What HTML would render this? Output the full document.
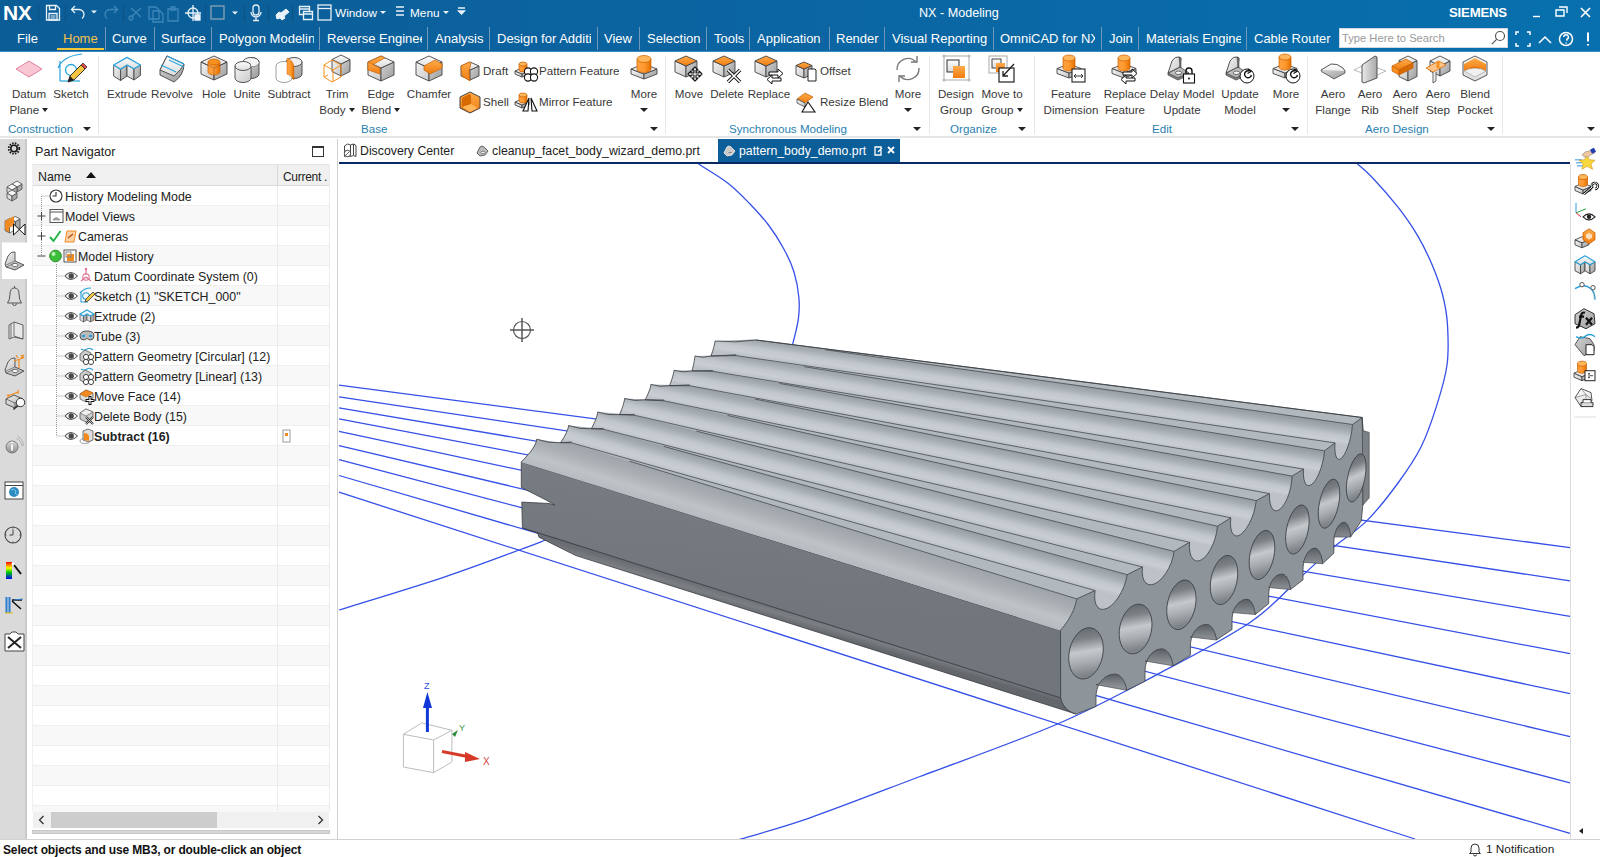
<!DOCTYPE html>
<html><head><meta charset="utf-8"><title>NX - Modeling</title>
<style>
*{box-sizing:border-box;margin:0;padding:0}
html,body{width:1600px;height:857px;overflow:hidden;background:#fff;font-family:"Liberation Sans",sans-serif;color:#222}
.a{position:absolute}
#top{left:0;top:0;width:1600px;height:52px;background:linear-gradient(to right,#0b5d96 0%,#0b64a1 45%,#0870ae 100%);border-bottom:1px solid #3a8cc2}
.tt{position:absolute;color:#fff;white-space:nowrap}
.tab{position:absolute;top:26px;height:26px;line-height:25px;font-size:13px;color:#fff;white-space:nowrap;overflow:hidden}
.tsep{position:absolute;top:27px;width:1px;height:23px;background:#7097b8}
#ribbon{left:0;top:52px;width:1600px;height:86px;background:#fff;border-bottom:2px solid #e6e6e6}
.lb{position:absolute;font-size:11.6px;color:#383838;white-space:nowrap;text-align:center;line-height:14px}
.glb{position:absolute;font-size:11.6px;color:#2a7fb0;white-space:nowrap;line-height:14px}
.gsep{position:absolute;top:56px;width:1px;height:78px;background:#e8e8e8}
.dd{position:absolute;width:0;height:0;border-left:4px solid transparent;border-right:4px solid transparent;border-top:4px solid #222}
#lstrip{left:0;top:139px;width:27px;height:700px;background:#dadada;border-right:2px solid #c9c9c9}
#nav{left:27px;top:139px;width:311px;height:700px;background:#fff;border-right:1px solid #cfcfcf}
.row{position:absolute;left:33px;width:296px;height:20px;border-bottom:1px solid #ececec}
.rt{position:absolute;font-size:12.4px;color:#222;white-space:nowrap;line-height:20px}
#vtabs{left:338px;top:139px;width:1262px;height:25px;background:#fff}
#status{left:0;top:839px;width:1600px;height:18px;background:#fff;border-top:1px solid #d2d2d2}
</style></head><body>
<div id="top" class="a">
<div class="tt" style="left:3px;top:1px;font-size:21px;font-weight:700;line-height:24px;letter-spacing:-0.5px">NX</div>
<svg class="a" style="left:0;top:0" width="520" height="26" viewBox="0 0 520 26" fill="none" stroke="#e8f1f8" stroke-width="1.3">
<line x1="38.5" y1="4" x2="38.5" y2="22" stroke="#0f5487"/>
<!-- save -->
<path d="M46.5 5.5h10l3 3v11.5h-13z"/><path d="M49.5 5.5v4h6v-4"/><path d="M49 13.5h8v6.5h-8z"/><path d="M50.5 16h5M50.5 18h5" stroke-width="1"/>
<line x1="65.5" y1="4" x2="65.5" y2="22" stroke="#0f5487"/>
<!-- undo -->
<path d="M72 9.5h7a5 5 0 0 1 5 5v0a5 5 0 0 1 -2 4"/><path d="M75 6l-3.5 3.5 3.5 3.5"/>
<path d="M91 10.5h6l-3 3z" fill="#e8f1f8" stroke="none"/>
<!-- redo disabled -->
<g stroke="#3f86b8"><path d="M117 9.5h-7a5 5 0 0 0 -5 5a5 5 0 0 0 2 4"/><path d="M114 6l3.5 3.5-3.5 3.5"/></g>
<line x1="123.5" y1="4" x2="123.5" y2="22" stroke="#0f5487"/>
<g stroke="#3f86b8"><path d="M131 8l10 9M141 8l-10 9"/><circle cx="131" cy="18" r="2"/><path d="M149 7h7l3 3v9h-10z"/><path d="M153 11h7l3 3v8h-10z"/><path d="M168 9h10v12h-10z"/><path d="M171 7h4v3h-4z"/></g>
<!-- cross icon -->
<circle cx="193" cy="13" r="5"/><path d="M193 5v16M185 13h16"/><path d="M195 15h5v5h-5z" fill="#e8f1f8"/>
<line x1="205.5" y1="4" x2="205.5" y2="22" stroke="#0f5487"/>
<rect x="211" y="6" width="13" height="13" stroke="#8aa3b6"/>
<path d="M232 11.5h6l-3 3z" fill="#e8f1f8" stroke="none"/>
<line x1="244.5" y1="4" x2="244.5" y2="22" stroke="#0f5487"/>
<!-- mic -->
<rect x="253" y="5" width="6" height="10" rx="3"/><path d="M251 12a5 5 0 0 0 10 0M256 17v3M253 20.5h6"/>
<line x1="268.5" y1="4" x2="268.5" y2="22" stroke="#0f5487"/>
<path d="M276 15l3-3 2 1 5-4 3 3 -5 4 1 2 -3 2 -2-2 -3 1z" fill="#e8f1f8" stroke-width="1"/>
<line x1="292.5" y1="4" x2="292.5" y2="22" stroke="#0f5487"/>
<path d="M299.5 6.5h10v8h-10z" /><path d="M303.5 11.5h9v8h-9z" fill="#0b64a0"/><path d="M299.5 9h10M303.5 14h9" />
<rect x="318" y="5" width="13" height="15"/><path d="M318 8.5h13"/>
<path d="M380 11h6l-3 3z" fill="#e8f1f8" stroke="none"/>
<path d="M396 7h8M396 11h8M396 15h8"/>
<path d="M443 11h6l-3 3z" fill="#e8f1f8" stroke="none"/>
<path d="M458 8h7M458.5 11h6l-3 3z" fill="#e8f1f8"/>
</svg>
<div class="tt" style="left:335px;top:6px;font-size:11.8px;line-height:15px">Window</div>
<div class="tt" style="left:410px;top:6px;font-size:11.8px;line-height:15px">Menu</div>
<div class="tt" style="left:919px;top:6px;font-size:12.6px;line-height:15px">NX - Modeling</div>
<div class="tt" style="left:1449px;top:5px;font-size:13.2px;font-weight:700;line-height:16px;letter-spacing:-0.2px">SIEMENS</div>
<svg class="a" style="left:1520px;top:0" width="80" height="26" fill="none" stroke="#fff" stroke-width="1.4">
<path d="M13 16.5h7"/>
<path d="M36 10h8v6h-8z M39 7h8v6"/>
<path d="M61 8l9 9M70 8l-9 9" stroke-width="1.6"/>
</svg>
<!-- tabs -->
<div class="tab" style="left:17px;width:40px">File</div>
<div class="tab" style="left:63px;width:40px;color:#f3c04a">Home</div>
<div class="a" style="left:57px;top:48px;width:47px;height:2px;background:#f0c53a"></div>
<div class="tsep" style="left:105px"></div>
<div class="tab" style="left:112px;width:40px">Curve</div>
<div class="tsep" style="left:154px"></div>
<div class="tab" style="left:161px;width:48px">Surface</div>
<div class="tsep" style="left:211px"></div>
<div class="tab" style="left:219px;width:95px">Polygon Modeling</div>
<div class="tsep" style="left:319px"></div>
<div class="tab" style="left:327px;width:95px">Reverse Engineering</div>
<div class="tsep" style="left:427px"></div>
<div class="tab" style="left:435px;width:52px">Analysis</div>
<div class="tsep" style="left:489px"></div>
<div class="tab" style="left:497px;width:94px">Design for Additive</div>
<div class="tsep" style="left:597px"></div>
<div class="tab" style="left:604px;width:34px">View</div>
<div class="tsep" style="left:639px"></div>
<div class="tab" style="left:647px;width:58px">Selection</div>
<div class="tsep" style="left:706px"></div>
<div class="tab" style="left:714px;width:34px">Tools</div>
<div class="tsep" style="left:749px"></div>
<div class="tab" style="left:757px;width:70px">Application</div>
<div class="tsep" style="left:829px"></div>
<div class="tab" style="left:836px;width:46px">Render</div>
<div class="tsep" style="left:884px"></div>
<div class="tab" style="left:892px;width:95px">Visual Reporting</div>
<div class="tsep" style="left:993px"></div>
<div class="tab" style="left:1000px;width:95px">OmniCAD for NX</div>
<div class="tsep" style="left:1101px"></div>
<div class="tab" style="left:1109px;width:27px">Join</div>
<div class="tsep" style="left:1138px"></div>
<div class="tab" style="left:1146px;width:95px">Materials Engineering</div>
<div class="tsep" style="left:1246px"></div>
<div class="tab" style="left:1254px;width:80px">Cable Router</div>
<div class="a" style="left:1339px;top:28px;width:169px;height:20px;background:#fff;border:1px solid #cfd8e0"></div>
<div class="a" style="left:1342px;top:31px;font-size:11.2px;color:#9a9a9a;line-height:14px;white-space:nowrap">Type Here to Search</div>
<svg class="a" style="left:1488px;top:28px" width="20" height="20" fill="none" stroke="#555" stroke-width="1.2"><circle cx="12" cy="8" r="4.5"/><path d="M8.8 11.2l-5 5"/></svg>
<svg class="a" style="left:1512px;top:26px" width="88" height="26" fill="none" stroke="#fff" stroke-width="1.5">
<path d="M4 9v-3h3M15 6h3v3M18 17v3h-3M7 20h-3v-3"/>
<path d="M27 17l6-6 6 6"/>
<circle cx="54" cy="13" r="6.5"/><path d="M51.8 11a2.3 2.3 0 1 1 3 2.2v1.6M54.2 16.6v0.8"/>
<path d="M76 6.5v9M76 18v1.5" stroke-width="2"/>
</svg>
</div>
<div id="ribbon" class="a"></div>
<svg class="a" style="left:0;top:0" width="1600" height="140">
<defs>
<linearGradient id="iw" x1="0" y1="0" x2="0" y2="1"><stop offset="0" stop-color="#fdfdfd"/><stop offset="1" stop-color="#dcdcdc"/></linearGradient>
<linearGradient id="il" x1="0" y1="0" x2="1" y2="1"><stop offset="0" stop-color="#f4f4f4"/><stop offset="1" stop-color="#c9c9c9"/></linearGradient>
<linearGradient id="ir" x1="0" y1="0" x2="1" y2="1"><stop offset="0" stop-color="#d2d2d2"/><stop offset="1" stop-color="#9c9c9c"/></linearGradient>
<linearGradient id="io" x1="0" y1="0" x2="0" y2="1"><stop offset="0" stop-color="#ffab4a"/><stop offset="1" stop-color="#f07c10"/></linearGradient>
<linearGradient id="ioh" x1="0" y1="0" x2="1" y2="0"><stop offset="0" stop-color="#ffa040"/><stop offset="0.5" stop-color="#ff9a30"/><stop offset="1" stop-color="#e57000"/></linearGradient>
<linearGradient id="ig" x1="0" y1="0" x2="1" y2="0"><stop offset="0" stop-color="#e9e9e9"/><stop offset="1" stop-color="#a8a8a8"/></linearGradient>
</defs>
<polygon points="16.0,69.0 29.0,61.0 42.0,69.0 29.0,77.0" fill="#f9c6d4" stroke="#e2809c" stroke-width="1" stroke-linejoin="round" />
<path d="M60,81 v-20 M58,68 q5,-12 24,-14" fill="none" stroke="#25a4dc" stroke-width="1.2"/><circle cx="71" cy="70" r="5.5" fill="none" stroke="#25a4dc" stroke-width="1.3"/><path d="M60,81 h20" stroke="#25a4dc" stroke-width="1.2"/><path d="M68,82 l2,-6 11,-11 4,4 -11,11z" fill="#f5c440" stroke="#222" stroke-width="0.9"/><path d="M81,65 l4,4 2,-2 -4,-4z" fill="#e24a4a" stroke="#222" stroke-width="0.7"/><path d="M68,82 l2,-6 4,4z" fill="#222"/>
<polygon points="113.7,65.0 120.6,69.3 120.6,80.5 113.7,76.2" fill="url(#il)" stroke="#444" stroke-width="0.9" stroke-linejoin="round" /><polygon points="120.6,69.3 127.0,65.0 127.0,76.0 120.6,80.5" fill="url(#ir)" stroke="#444" stroke-width="0.9" stroke-linejoin="round" /><polygon points="127.0,65.0 134.0,68.8 134.0,80.0 127.0,76.0" fill="url(#il)" stroke="#444" stroke-width="0.9" stroke-linejoin="round" /><polygon points="134.0,68.8 140.4,65.0 140.4,75.5 134.0,80.0" fill="url(#ir)" stroke="#444" stroke-width="0.9" stroke-linejoin="round" /><polygon points="113.7,65.0 127.0,57.4 140.4,65.0 134.0,68.8 127.0,65.0 120.6,69.3" fill="url(#iw)" stroke="#2aa6de" stroke-width="1.3" stroke-linejoin="round" />
<path d="M160,70 L167,56 L184,64 Q184,75 174,82 L160,75z" fill="url(#ir)" stroke="#444" stroke-width="0.9"/><path d="M160,70 L174,76 Q182,69 184,64 L167,56z" fill="url(#iw)" stroke="#444" stroke-width="0.9"/><path d="M161,65 l15,7 M167,56 l17,8 M169,60 l15,7" fill="none" stroke="#2aa6de" stroke-width="1.2"/>
<polygon points="201.0,62.0 214.0,68.0 214.0,80.0 201.0,74.0" fill="url(#il)" stroke="#444" stroke-width="0.9" stroke-linejoin="round" /><polygon points="214.0,68.0 227.0,62.0 227.0,74.0 214.0,80.0" fill="url(#ir)" stroke="#444" stroke-width="0.9" stroke-linejoin="round" /><polygon points="214.0,56.0 227.0,62.0 214.0,68.0 201.0,62.0" fill="#ececec" stroke="#444" stroke-width="0.9" stroke-linejoin="round" /><path d="M208,62 v10 a6,3 0 0 0 12,0 v-10z" fill="url(#ioh)" stroke="#c86000" stroke-width="0.7"/><ellipse cx="214" cy="62" rx="6" ry="3" fill="#f7901e" stroke="#c86000" stroke-width="0.7"/><path d="M201,62 L214,68 L227,62 M214,68 V80" fill="none" stroke="#444" stroke-width="0.6" opacity="0.6"/>
<path d="M243,62 v12 a8,4.5 0 0 0 16,0 v-12z" fill="url(#ir)" stroke="#444" stroke-width="0.9"/><ellipse cx="251" cy="62" rx="8" ry="4.5" fill="url(#iw)" stroke="#444" stroke-width="0.9"/><path d="M235,66 v12 a8,4.5 0 0 0 16,0 v-12z" fill="url(#il)" stroke="#444" stroke-width="0.9"/><ellipse cx="243" cy="66" rx="8" ry="4.5" fill="url(#iw)" stroke="#444" stroke-width="0.9"/><path d="M251,57.5 a8,4.5 0 0 1 0,9" fill="#f4f4f4" stroke="none"/><path d="M251,57.5 a8,4.5 0 0 1 8,4.5" fill="none" stroke="#444" stroke-width="0.9"/>
<path d="M286,62 v12 a8,4.5 0 0 0 16,0 v-12z" fill="url(#ir)" stroke="#444" stroke-width="0.9"/><ellipse cx="294" cy="62" rx="8" ry="4.5" fill="#eeeeee" stroke="#444" stroke-width="0.9"/><path d="M276,66 v12 a8,4.5 0 0 0 16,0 v-12 a8,4.5 0 0 0 -16,0z" fill="#fff" stroke="#888" stroke-width="0.8"/><path d="M287,58 q6,2 7,9 v13 q-3,-5 -7,-6z" fill="url(#ioh)" stroke="#c86000" stroke-width="0.5"/>
<polygon points="332.0,59.5 341.0,64.0 341.0,76.0 332.0,71.5" fill="url(#il)" stroke="#444" stroke-width="0.9" stroke-linejoin="round" /><polygon points="341.0,64.0 350.0,59.5 350.0,71.5 341.0,76.0" fill="url(#ir)" stroke="#444" stroke-width="0.9" stroke-linejoin="round" /><polygon points="341.0,55.0 350.0,59.5 341.0,64.0 332.0,59.5" fill="url(#iw)" stroke="#444" stroke-width="0.9" stroke-linejoin="round" /><path d="M324,65 l8,-5 9,5 v12 l-9,5 -8,-5z M324,65 l9,5 8,-5 M333,70 v12 M324,77 l4,-2" fill="none" stroke="#f7901e" stroke-width="1"/>
<polygon points="368.0,62.0 381.0,68.0 381.0,81.0 368.0,75.0" fill="url(#il)" stroke="#444" stroke-width="0.9" stroke-linejoin="round" /><polygon points="381.0,68.0 394.0,62.0 394.0,75.0 381.0,81.0" fill="url(#ir)" stroke="#444" stroke-width="0.9" stroke-linejoin="round" /><polygon points="381.0,56.0 394.0,62.0 381.0,68.0 368.0,62.0" fill="url(#iw)" stroke="#444" stroke-width="0.9" stroke-linejoin="round" /><path d="M368,62 L381,56 L385,58 L372,65 Q369,66 368,70z" fill="url(#io)" stroke="#c86000" stroke-width="0.6"/><path d="M368,62 Q368,72 377,73 L381,74" fill="none"/><polygon points="368.0,62.0 380.0,68.0 380.0,74.0 368.0,70.0" fill="url(#io)" stroke="#c86000" stroke-width="0.6" stroke-linejoin="round" />
<polygon points="416.0,62.0 429.0,68.0 429.0,81.0 416.0,75.0" fill="url(#il)" stroke="#444" stroke-width="0.9" stroke-linejoin="round" /><polygon points="429.0,68.0 442.0,62.0 442.0,75.0 429.0,81.0" fill="url(#ir)" stroke="#444" stroke-width="0.9" stroke-linejoin="round" /><polygon points="429.0,56.0 442.0,62.0 429.0,68.0 416.0,62.0" fill="url(#iw)" stroke="#444" stroke-width="0.9" stroke-linejoin="round" /><polygon points="424.0,66.0 435.0,60.0 442.0,64.0 442.0,68.0 430.0,74.0 424.0,70.0" fill="url(#io)" stroke="#c86000" stroke-width="0.7" stroke-linejoin="round" />
<polygon points="631.0,69.0 644.0,74.0 644.0,79.0 631.0,74.0" fill="url(#il)" stroke="#444" stroke-width="0.9" stroke-linejoin="round" /><polygon points="644.0,74.0 657.0,69.0 657.0,74.0 644.0,79.0" fill="url(#ir)" stroke="#444" stroke-width="0.9" stroke-linejoin="round" /><polygon points="644.0,64.0 657.0,69.0 644.0,74.0 631.0,69.0" fill="url(#iw)" stroke="#444" stroke-width="0.9" stroke-linejoin="round" /><path d="M637,59 v10 a7,3.5 0 0 0 14,0 v-10z" fill="url(#ioh)" stroke="#c86000" stroke-width="0.7"/><ellipse cx="644" cy="59" rx="7" ry="3.5" fill="#ffb559" stroke="#c86000" stroke-width="0.7"/>
<polygon points="675.0,61.0 686.0,66.0 686.0,77.0 675.0,72.0" fill="url(#il)" stroke="#444" stroke-width="0.9" stroke-linejoin="round" /><polygon points="686.0,66.0 697.0,61.0 697.0,72.0 686.0,77.0" fill="url(#ir)" stroke="#444" stroke-width="0.9" stroke-linejoin="round" /><polygon points="686.0,56.0 697.0,61.0 686.0,66.0 675.0,61.0" fill="url(#io)" stroke="#444" stroke-width="0.9" stroke-linejoin="round" /><path d="M695,67 l3,3 h-2 v3 h3 v-2 l3,3 -3,3 v-2 h-3 v3 h2 l-3,3 -3,-3 h2 v-3 h-3 v2 l-3,-3 3,-3 v2 h3 v-3 h-2z" fill="#fff" stroke="#111" stroke-width="1.1" stroke-linejoin="round"/>
<polygon points="713.0,61.0 724.0,66.0 724.0,77.0 713.0,72.0" fill="url(#il)" stroke="#444" stroke-width="0.9" stroke-linejoin="round" /><polygon points="724.0,66.0 735.0,61.0 735.0,72.0 724.0,77.0" fill="url(#ir)" stroke="#444" stroke-width="0.9" stroke-linejoin="round" /><polygon points="724.0,56.0 735.0,61.0 724.0,66.0 713.0,61.0" fill="url(#io)" stroke="#444" stroke-width="0.9" stroke-linejoin="round" /><path d="M728,70 L740,82 M740,70 L728,82" stroke="#111" stroke-width="3.4"/><path d="M728,70 L740,82 M740,70 L728,82" stroke="#fff" stroke-width="1.6"/>
<polygon points="755.0,61.0 766.0,66.0 766.0,77.0 755.0,72.0" fill="url(#il)" stroke="#444" stroke-width="0.9" stroke-linejoin="round" /><polygon points="766.0,66.0 777.0,61.0 777.0,72.0 766.0,77.0" fill="url(#ir)" stroke="#444" stroke-width="0.9" stroke-linejoin="round" /><polygon points="766.0,56.0 777.0,61.0 766.0,66.0 755.0,61.0" fill="url(#io)" stroke="#444" stroke-width="0.9" stroke-linejoin="round" /><path d="M769,72 h9 v-3 l5,4.5 -5,4.5 v-3 h-9z" fill="#fff" stroke="#111" stroke-width="1"/><path d="M781,78 h-9 v-3 l-5,4.5 5,4.5 v-3 h9z" fill="#fff" stroke="#111" stroke-width="1"/>
<path d="M897,70 a11,11 0 0 1 19,-8" fill="none" stroke="#777" stroke-width="1.4"/><path d="M917,56 v6 h-6" fill="none" stroke="#777" stroke-width="1.4"/><path d="M919,68 a11,11 0 0 1 -19,8" fill="none" stroke="#777" stroke-width="1.4"/><path d="M899,82 v-6 h6" fill="none" stroke="#777" stroke-width="1.4"/>
<rect x="944" y="56" width="25" height="24" fill="none" stroke="#aaa" stroke-width="1"/><circle cx="944" cy="56" r="1.6" fill="#bbb"/><circle cx="969" cy="56" r="1.6" fill="#bbb"/><circle cx="944" cy="80" r="1.6" fill="#bbb"/><circle cx="969" cy="80" r="1.6" fill="#bbb"/><rect x="947" y="60" width="12" height="12" fill="url(#iw)" stroke="#333" stroke-width="1"/><rect x="953" y="66" width="12" height="12" fill="url(#io)"/>
<rect x="989" y="56" width="18" height="17" fill="none" stroke="#aaa" stroke-width="1"/><rect x="992" y="59" width="9" height="9" fill="url(#iw)" stroke="#333" stroke-width="0.9"/><rect x="996" y="63" width="9" height="9" fill="url(#io)"/><rect x="999" y="68" width="15" height="14" fill="#fff" stroke="#222" stroke-width="1.2"/><path d="M1014,64 L1003,76 M1003,71 v5 h5" fill="none" stroke="#222" stroke-width="1.3"/>
<polygon points="1057.0,68.5 1069.0,73.0 1069.0,78.0 1057.0,73.5" fill="url(#il)" stroke="#444" stroke-width="0.9" stroke-linejoin="round" /><polygon points="1069.0,73.0 1081.0,68.5 1081.0,73.5 1069.0,78.0" fill="url(#ir)" stroke="#444" stroke-width="0.9" stroke-linejoin="round" /><polygon points="1069.0,64.0 1081.0,68.5 1069.0,73.0 1057.0,68.5" fill="url(#iw)" stroke="#444" stroke-width="0.9" stroke-linejoin="round" /><path d="M1063,58 v10 a6,3 0 0 0 12,0 v-10z" fill="url(#ioh)" stroke="#c86000" stroke-width="0.7"/><ellipse cx="1069" cy="58" rx="6" ry="3" fill="#ffb559" stroke="#c86000" stroke-width="0.7"/><rect x="1072" y="69" width="13" height="13" fill="#fff" stroke="#222" stroke-width="1.1"/><path d="M1074,76 h9 M1076,74 l-2,2 2,2 M1081,74 l2,2 -2,2" fill="none" stroke="#222" stroke-width="0.9"/>
<polygon points="1112.0,68.5 1124.0,73.0 1124.0,78.0 1112.0,73.5" fill="url(#il)" stroke="#444" stroke-width="0.9" stroke-linejoin="round" /><polygon points="1124.0,73.0 1136.0,68.5 1136.0,73.5 1124.0,78.0" fill="url(#ir)" stroke="#444" stroke-width="0.9" stroke-linejoin="round" /><polygon points="1124.0,64.0 1136.0,68.5 1124.0,73.0 1112.0,68.5" fill="url(#iw)" stroke="#444" stroke-width="0.9" stroke-linejoin="round" /><path d="M1118,58 v10 a6,3 0 0 0 12,0 v-10z" fill="url(#ioh)" stroke="#c86000" stroke-width="0.7"/><ellipse cx="1124" cy="58" rx="6" ry="3" fill="#ffb559" stroke="#c86000" stroke-width="0.7"/><path d="M1123,72 h9 v-3 l5,4.5 -5,4.5 v-3 h-9z" fill="#fff" stroke="#111" stroke-width="1"/><path d="M1135,78 h-9 v-3 l-5,4.5 5,4.5 v-3 h9z" fill="#fff" stroke="#111" stroke-width="1"/>
<path d="M1168,73 L1168,75 L1178,80 L1189,75 L1189,73z" fill="#8a8a8a" stroke="#444" stroke-width="0.8"/><path d="M1168,73 L1180,67 L1189,73 L1178,78z" fill="url(#ir)" stroke="#444" stroke-width="0.8"/><ellipse cx="1178.5" cy="72.8" rx="3.2" ry="1.7" fill="#f2f2f2" stroke="#444" stroke-width="0.7"/><path d="M1168,73 L1172,61 Q1175,56 1179,57 L1181,58 L1180,67z" fill="url(#il)" stroke="#444" stroke-width="0.9"/><path d="M1179,57 L1181,58 L1181,68 L1180,67z" fill="#777" stroke="#444" stroke-width="0.6"/><path d="M1186,74 v-3 a3,3 0 0 1 6,0 v3" fill="none" stroke="#111" stroke-width="1.4"/><rect x="1183.5" y="74" width="11" height="9" fill="#fff" stroke="#111" stroke-width="1.1"/><circle cx="1189" cy="78.5" r="1" fill="#111"/>
<path d="M1226,73 L1226,75 L1236,80 L1247,75 L1247,73z" fill="#8a8a8a" stroke="#444" stroke-width="0.8"/><path d="M1226,73 L1238,67 L1247,73 L1236,78z" fill="url(#ir)" stroke="#444" stroke-width="0.8"/><ellipse cx="1236.5" cy="72.8" rx="3.2" ry="1.7" fill="#f2f2f2" stroke="#444" stroke-width="0.7"/><path d="M1226,73 L1230,61 Q1233,56 1237,57 L1239,58 L1238,67z" fill="url(#il)" stroke="#444" stroke-width="0.9"/><path d="M1237,57 L1239,58 L1239,68 L1238,67z" fill="#777" stroke="#444" stroke-width="0.6"/><circle cx="1247" cy="76" r="7.0" fill="#fff" stroke="#111" stroke-width="1"/><path d="M1251.5,75 a3.5,3.5 0 1 1 -2,-4" fill="none" stroke="#111" stroke-width="1.4"/><path d="M1248,69 l3,2.5 -3.5,2" fill="none" stroke="#111" stroke-width="1.2"/>
<polygon points="1273.0,68.5 1285.0,73.0 1285.0,78.0 1273.0,73.5" fill="url(#il)" stroke="#444" stroke-width="0.9" stroke-linejoin="round" /><polygon points="1285.0,73.0 1297.0,68.5 1297.0,73.5 1285.0,78.0" fill="url(#ir)" stroke="#444" stroke-width="0.9" stroke-linejoin="round" /><polygon points="1285.0,64.0 1297.0,68.5 1285.0,73.0 1273.0,68.5" fill="url(#iw)" stroke="#444" stroke-width="0.9" stroke-linejoin="round" /><path d="M1279,57 v10 a6,3 0 0 0 12,0 v-10z" fill="url(#ioh)" stroke="#c86000" stroke-width="0.7"/><ellipse cx="1285" cy="57" rx="6" ry="3" fill="#ffb559" stroke="#c86000" stroke-width="0.7"/><circle cx="1293" cy="76" r="7.0" fill="#fff" stroke="#111" stroke-width="1"/><path d="M1297.5,75 a3.5,3.5 0 1 1 -2,-4" fill="none" stroke="#111" stroke-width="1.4"/><path d="M1294,69 l3,2.5 -3.5,2" fill="none" stroke="#111" stroke-width="1.2"/>
<path d="M1321,70 L1331,64 Q1337,63 1343,68 L1345,71 L1334,77 Q1327,73 1321,70z" fill="url(#iw)" stroke="#444" stroke-width="0.9"/><path d="M1321,70 l1,2 Q1328,75 1334,79 L1345,73 v-2" fill="url(#ir)" stroke="#444" stroke-width="0.8"/>
<polygon points="1354,70 1366,64 1386,71 1373,77" fill="none" stroke="#aaa" stroke-width="0.8"/><polygon points="1362.0,65.0 1375.0,56.0 1377.0,57.0 1377.0,78.0 1364.0,83.0 1362.0,82.0" fill="url(#ig)" stroke="#444" stroke-width="0.9" stroke-linejoin="round" />
<polygon points="1399.0,60.5 1408.0,65.0 1408.0,81.0 1399.0,76.5" fill="url(#il)" stroke="#444" stroke-width="0.9" stroke-linejoin="round" /><polygon points="1408.0,65.0 1417.0,60.5 1417.0,76.5 1408.0,81.0" fill="url(#ir)" stroke="#444" stroke-width="0.9" stroke-linejoin="round" /><polygon points="1408.0,56.0 1417.0,60.5 1408.0,65.0 1399.0,60.5" fill="url(#iw)" stroke="#444" stroke-width="0.9" stroke-linejoin="round" /><polygon points="1392.0,66.0 1406.0,59.0 1413.0,63.0 1399.0,70.0" fill="url(#io)" stroke="#c86000" stroke-width="0.7" stroke-linejoin="round" /><polygon points="1392.0,66.0 1399.0,70.0 1399.0,75.0 1392.0,71.0" fill="#f7901e" stroke="#c86000" stroke-width="0.7" stroke-linejoin="round" /><polygon points="1399.0,70.0 1413.0,63.0 1413.0,68.0 1399.0,75.0" fill="#d96a00" stroke="#c86000" stroke-width="0.7" stroke-linejoin="round" />
<polygon points="1430.0,61.0 1440.0,66.0 1440.0,76.0 1430.0,71.0" fill="url(#il)" stroke="#444" stroke-width="0.9" stroke-linejoin="round" /><polygon points="1440.0,66.0 1450.0,61.0 1450.0,71.0 1440.0,76.0" fill="url(#ir)" stroke="#444" stroke-width="0.9" stroke-linejoin="round" /><polygon points="1440.0,56.0 1450.0,61.0 1440.0,66.0 1430.0,61.0" fill="url(#iw)" stroke="#444" stroke-width="0.9" stroke-linejoin="round" /><polygon points="1426.0,68.0 1439.0,61.0 1446.0,65.0 1433.0,72.0" fill="#ffc48a" stroke="#e07000" stroke-width="0.8" stroke-linejoin="round" /><path d="M1433,72 v11 l3,-2 v-9" fill="#eee" stroke="#444" stroke-width="0.8"/><path d="M1438,61 v7" stroke="#f7901e" stroke-width="3"/>
<polygon points="1475.0,56.0 1487.0,62.0 1487.0,75.0 1475.0,81.0 1463.0,75.0 1463.0,62.0" fill="url(#iw)" stroke="#444" stroke-width="0.9" stroke-linejoin="round" /><path d="M1464,64 L1475,58 L1486,64 V71 Q1475,65 1464,71z" fill="url(#io)"/><path d="M1464,71 Q1475,65 1486,71 L1475,77z" fill="#f0f0f0" stroke="#999" stroke-width="0.6"/><path d="M1467,70 Q1475,63 1483,70 L1486,71 Q1475,65 1464,71z" fill="#d96a00" opacity="0.7"/>
<polygon points="461.0,66.0 470.0,70.0 470.0,80.0 461.0,76.0" fill="url(#il)" stroke="#444" stroke-width="0.9" stroke-linejoin="round" /><polygon points="470.0,70.0 479.0,66.0 479.0,76.0 470.0,80.0" fill="url(#ir)" stroke="#444" stroke-width="0.9" stroke-linejoin="round" /><polygon points="470.0,62.0 479.0,66.0 470.0,70.0 461.0,66.0" fill="url(#iw)" stroke="#444" stroke-width="0.9" stroke-linejoin="round" /><polygon points="461.0,66.0 469.0,62.0 471.0,63.0 469.0,72.0 470.0,81.0 462.0,76.0" fill="url(#io)" stroke="#c86000" stroke-width="0.7" stroke-linejoin="round" />
<polygon points="470.0,92.0 480.0,97.0 480.0,108.0 470.0,113.0 460.0,108.0 460.0,97.0" fill="url(#io)" stroke="#444" stroke-width="1" stroke-linejoin="round" /><polygon points="462.0,98.0 469.0,94.0 471.0,95.0 471.0,105.0 478.0,108.0 470.0,112.0 462.0,108.0" fill="#d96a00" stroke="none" stroke-width="0" stroke-linejoin="round" /><polygon points="462.0,107.0 471.0,104.0 478.0,108.0 470.0,112.0" fill="#ffb559" stroke="none" stroke-width="0" stroke-linejoin="round" />
<polygon points="515.0,71.0 522.0,74.0 522.0,77.0 515.0,74.0" fill="url(#il)" stroke="#444" stroke-width="0.9" stroke-linejoin="round" /><polygon points="522.0,74.0 529.0,71.0 529.0,74.0 522.0,77.0" fill="url(#ir)" stroke="#444" stroke-width="0.9" stroke-linejoin="round" /><polygon points="522.0,68.0 529.0,71.0 522.0,74.0 515.0,71.0" fill="url(#iw)" stroke="#444" stroke-width="0.9" stroke-linejoin="round" /><path d="M519,64 v6 a4,2 0 0 0 8,0 v-6z" fill="url(#ioh)" stroke="#c86000" stroke-width="0.7"/><ellipse cx="523" cy="64" rx="4" ry="2" fill="#ffb559" stroke="#c86000" stroke-width="0.7"/><circle cx="528" cy="71.5" r="3.6" fill="#fff" stroke="#111" stroke-width="1.1"/><circle cx="534" cy="71.5" r="3.6" fill="#fff" stroke="#111" stroke-width="1.1"/><circle cx="528" cy="77.5" r="3.6" fill="#fff" stroke="#111" stroke-width="1.1"/><circle cx="534" cy="77.5" r="3.6" fill="#fff" stroke="#111" stroke-width="1.1"/>
<polygon points="515.0,102.0 522.0,105.0 522.0,108.0 515.0,105.0" fill="url(#il)" stroke="#444" stroke-width="0.9" stroke-linejoin="round" /><polygon points="522.0,105.0 529.0,102.0 529.0,105.0 522.0,108.0" fill="url(#ir)" stroke="#444" stroke-width="0.9" stroke-linejoin="round" /><polygon points="522.0,99.0 529.0,102.0 522.0,105.0 515.0,102.0" fill="url(#iw)" stroke="#444" stroke-width="0.9" stroke-linejoin="round" /><path d="M519,95 v6 a4,2 0 0 0 8,0 v-6z" fill="url(#ioh)" stroke="#c86000" stroke-width="0.7"/><ellipse cx="523" cy="95" rx="4" ry="2" fill="#ffb559" stroke="#c86000" stroke-width="0.7"/><path d="M529,98 l-6,13 h5z M531,98 l6,13 h-5z" fill="#fff" stroke="#111" stroke-width="1.1"/>
<polygon points="796.0,65.5 804.0,69.0 804.0,78.0 796.0,74.5" fill="url(#il)" stroke="#444" stroke-width="0.9" stroke-linejoin="round" /><polygon points="804.0,69.0 812.0,65.5 812.0,74.5 804.0,78.0" fill="url(#ir)" stroke="#444" stroke-width="0.9" stroke-linejoin="round" /><polygon points="804.0,62.0 812.0,65.5 804.0,69.0 796.0,65.5" fill="url(#io)" stroke="#444" stroke-width="0.9" stroke-linejoin="round" /><path d="M808,69 h7 l1,1 v11 h-8z" fill="#fff" stroke="#222" stroke-width="1"/>
<polygon points="797.0,99.0 805.0,93.0 813.0,97.0 805.0,103.0" fill="url(#io)" stroke="#c86000" stroke-width="0.7" stroke-linejoin="round" /><polygon points="797.0,99.0 805.0,103.0 805.0,107.0 797.0,103.0" fill="url(#il)" stroke="#444" stroke-width="0.8" stroke-linejoin="round" /><path d="M808,102 l7,10 h-13z" fill="#fff" stroke="#111" stroke-width="1.1"/>
</svg>
<div class="lb" style="left:-31px;top:87px;width:120px">Datum</div>
<div class="lb" style="left:-31px;top:103px;width:120px">Plane&nbsp;<span style="display:inline-block;width:0;height:0;border-left:3.5px solid transparent;border-right:3.5px solid transparent;border-top:4px solid #222;vertical-align:2px"></span></div>
<div class="lb" style="left:11px;top:87px;width:120px">Sketch</div>
<div class="lb" style="left:67px;top:87px;width:120px">Extrude</div>
<div class="lb" style="left:112px;top:87px;width:120px">Revolve</div>
<div class="lb" style="left:154px;top:87px;width:120px">Hole</div>
<div class="lb" style="left:187px;top:87px;width:120px">Unite</div>
<div class="lb" style="left:229px;top:87px;width:120px">Subtract</div>
<div class="lb" style="left:277px;top:87px;width:120px">Trim</div>
<div class="lb" style="left:277px;top:103px;width:120px">Body&nbsp;<span style="display:inline-block;width:0;height:0;border-left:3.5px solid transparent;border-right:3.5px solid transparent;border-top:4px solid #222;vertical-align:2px"></span></div>
<div class="lb" style="left:321px;top:87px;width:120px">Edge</div>
<div class="lb" style="left:321px;top:103px;width:120px">Blend&nbsp;<span style="display:inline-block;width:0;height:0;border-left:3.5px solid transparent;border-right:3.5px solid transparent;border-top:4px solid #222;vertical-align:2px"></span></div>
<div class="lb" style="left:369px;top:87px;width:120px">Chamfer</div>
<div class="lb" style="left:584px;top:87px;width:120px">More</div>
<div class="dd" style="left:640px;top:108px"></div>
<div class="lb" style="left:629px;top:87px;width:120px">Move</div>
<div class="lb" style="left:667px;top:87px;width:120px">Delete</div>
<div class="lb" style="left:709px;top:87px;width:120px">Replace</div>
<div class="lb" style="left:848px;top:87px;width:120px">More</div>
<div class="dd" style="left:904px;top:108px"></div>
<div class="lb" style="left:896px;top:87px;width:120px">Design</div>
<div class="lb" style="left:896px;top:103px;width:120px">Group</div>
<div class="lb" style="left:942px;top:87px;width:120px">Move to</div>
<div class="lb" style="left:942px;top:103px;width:120px">Group&nbsp;<span style="display:inline-block;width:0;height:0;border-left:3.5px solid transparent;border-right:3.5px solid transparent;border-top:4px solid #222;vertical-align:2px"></span></div>
<div class="lb" style="left:1011px;top:87px;width:120px">Feature</div>
<div class="lb" style="left:1011px;top:103px;width:120px">Dimension</div>
<div class="lb" style="left:1065px;top:87px;width:120px">Replace</div>
<div class="lb" style="left:1065px;top:103px;width:120px">Feature</div>
<div class="lb" style="left:1122px;top:87px;width:120px">Delay Model</div>
<div class="lb" style="left:1122px;top:103px;width:120px">Update</div>
<div class="lb" style="left:1180px;top:87px;width:120px">Update</div>
<div class="lb" style="left:1180px;top:103px;width:120px">Model</div>
<div class="lb" style="left:1226px;top:87px;width:120px">More</div>
<div class="dd" style="left:1282px;top:108px"></div>
<div class="lb" style="left:1273px;top:87px;width:120px">Aero</div>
<div class="lb" style="left:1273px;top:103px;width:120px">Flange</div>
<div class="lb" style="left:1310px;top:87px;width:120px">Aero</div>
<div class="lb" style="left:1310px;top:103px;width:120px">Rib</div>
<div class="lb" style="left:1345px;top:87px;width:120px">Aero</div>
<div class="lb" style="left:1345px;top:103px;width:120px">Shelf</div>
<div class="lb" style="left:1378px;top:87px;width:120px">Aero</div>
<div class="lb" style="left:1378px;top:103px;width:120px">Step</div>
<div class="lb" style="left:1415px;top:87px;width:120px">Blend</div>
<div class="lb" style="left:1415px;top:103px;width:120px">Pocket</div>
<div class="lb" style="left:483px;top:64px;text-align:left">Draft</div>
<div class="lb" style="left:483px;top:95px;text-align:left">Shell</div>
<div class="lb" style="left:539px;top:64px;text-align:left">Pattern Feature</div>
<div class="lb" style="left:539px;top:95px;text-align:left">Mirror Feature</div>
<div class="lb" style="left:820px;top:64px;text-align:left">Offset</div>
<div class="lb" style="left:820px;top:95px;text-align:left">Resize Blend</div>
<div class="glb" style="left:8px;top:122px">Construction</div>
<div class="dd" style="left:83px;top:127px"></div>
<div class="glb" style="left:361px;top:122px">Base</div>
<div class="dd" style="left:650px;top:127px"></div>
<div class="glb" style="left:729px;top:122px">Synchronous Modeling</div>
<div class="dd" style="left:913px;top:127px"></div>
<div class="glb" style="left:950px;top:122px">Organize</div>
<div class="dd" style="left:1018px;top:127px"></div>
<div class="glb" style="left:1152px;top:122px">Edit</div>
<div class="dd" style="left:1291px;top:127px"></div>
<div class="glb" style="left:1365px;top:122px">Aero Design</div>
<div class="dd" style="left:1487px;top:127px"></div>
<div class="dd" style="left:1587px;top:127px"></div>
<div class="gsep" style="left:98px"></div>
<div class="gsep" style="left:665px"></div>
<div class="gsep" style="left:929px"></div>
<div class="gsep" style="left:1034px"></div>
<div class="gsep" style="left:1307px"></div>
<div class="gsep" style="left:1502px"></div>
<div id="lstrip" class="a"></div>
<svg class="a" style="left:0;top:0" width="27" height="860">
<defs><linearGradient id="sg" x1="0" y1="0" x2="1" y2="1"><stop offset="0" stop-color="#f2f2f2"/><stop offset="1" stop-color="#a9a9a9"/></linearGradient><linearGradient id="sg2" x1="0" y1="0" x2="0" y2="1"><stop offset="0" stop-color="#d9d9d9"/><stop offset="1" stop-color="#8f8f8f"/></linearGradient><linearGradient id="rb" x1="0" y1="0" x2="0" y2="1"><stop offset="0" stop-color="#f00"/><stop offset="0.35" stop-color="#ff0"/><stop offset="0.6" stop-color="#0c0"/><stop offset="1" stop-color="#00f"/></linearGradient></defs>
<circle cx="14" cy="148.5" r="3.2" fill="none" stroke="#1a1a1a" stroke-width="1.6"/><circle cx="14" cy="148.5" r="5.3" fill="none" stroke="#1a1a1a" stroke-width="1.8" stroke-dasharray="1.6,1.2"/>
<polygon points="12,184 17,187 17,192 12,189" fill="#dedede" stroke="#4a4a4a" stroke-width="0.8"/><polygon points="17,187 22,184 22,189 17,192" fill="#a8a8a8" stroke="#4a4a4a" stroke-width="0.8"/><polygon points="12,184 17,181 22,184 17,187" fill="#f6f6f6" stroke="#4a4a4a" stroke-width="0.8"/><polygon points="7,187 12,190 12,195 7,192" fill="#dedede" stroke="#4a4a4a" stroke-width="0.8"/><polygon points="12,190 17,187 17,192 12,195" fill="#a8a8a8" stroke="#4a4a4a" stroke-width="0.8"/><polygon points="7,187 12,184 17,187 12,190" fill="#f6f6f6" stroke="#4a4a4a" stroke-width="0.8"/><polygon points="7,193 12,196 12,201 7,198" fill="#dedede" stroke="#4a4a4a" stroke-width="0.8"/><polygon points="12,196 17,193 17,198 12,201" fill="#a8a8a8" stroke="#4a4a4a" stroke-width="0.8"/><polygon points="7,193 12,190 17,193 12,196" fill="#f6f6f6" stroke="#4a4a4a" stroke-width="0.8"/>
<polygon points="11,219 15.5,221.5 15.5,230.5 11,228" fill="#dedede" stroke="#4a4a4a" stroke-width="0.8"/><polygon points="15.5,221.5 20.0,219 20.0,228 15.5,230.5" fill="#a8a8a8" stroke="#4a4a4a" stroke-width="0.8"/><polygon points="11,219 15.5,216.5 20.0,219 15.5,221.5" fill="#f6f6f6" stroke="#4a4a4a" stroke-width="0.8"/>
<polygon points="5,221 9.5,223.5 9.5,233 5,230.5" fill="#f28a1e" stroke="#555" stroke-width="0.7"/><polygon points="9.5,223.5 14,221 14,230.5 9.5,233" fill="#f5f5f5" stroke="#555" stroke-width="0.7"/><polygon points="5,221 9.5,218.5 14,221 9.5,223.5" fill="#f7a040" stroke="#555" stroke-width="0.7"/><polygon points="5,221 14,216 14,226 5,229" fill="#f28a1e" opacity="0.9"/>
<path d="M13.5,224 L25,235 V224 L13.5,235z" fill="#fff" stroke="#111" stroke-width="1"/>
<rect x="2" y="242.5" width="25" height="36.5" fill="#fff"/>
<path d="M5,264 L8,256 Q11,251 15,252 L15,261 L24,265 L15,270 L6,267z" fill="url(#sg)" stroke="#4a4a4a" stroke-width="0.9"/><path d="M15,261 L6,265 M6,267 L15,263" fill="none" stroke="#4a4a4a" stroke-width="0.6"/><ellipse cx="15" cy="265" rx="3" ry="1.6" fill="#fff" stroke="#4a4a4a" stroke-width="0.7"/>
<path d="M7.5,303 Q10,300 10,294 Q10,288 14.5,288 Q19,288 19,294 Q19,300 21.5,303z M12.5,303.5 a2,2 0 0 0 4,0 M14.5,286 v2" fill="none" stroke="#555" stroke-width="1"/>
<path d="M9,325 l5,-3 l9,3 v14 l-9,-2 l-5,2z" fill="#e8e8e8" stroke="#555" stroke-width="0.9"/><path d="M14,322 v14 M11,324 v14" fill="none" stroke="#555" stroke-width="0.8"/><path d="M14,336 l9,3" stroke="#555" stroke-width="0.8"/>
<path d="M5,370 L8,362 Q11,357 15,358 L15,367 L24,371 L15,376 L6,373z" fill="url(#sg)" stroke="#4a4a4a" stroke-width="0.9"/><path d="M15,367 L6,371 M6,373 L15,369" fill="none" stroke="#4a4a4a" stroke-width="0.6"/><ellipse cx="15" cy="371" rx="3" ry="1.6" fill="#fff" stroke="#4a4a4a" stroke-width="0.7"/>
<path d="M14,361 l9,-3 M16,355 l2,3 M21,355 l3,3 M24,355 l-3,3 M19,360 v8" fill="none" stroke="#f28a1e" stroke-width="1.2"/>
<path d="M6,399 l8,-4 l9,4 v5 l-8,4 l-9,-4z" fill="url(#sg)" stroke="#444" stroke-width="0.9"/><path d="M6,399 l9,4 l8,-4 M15,403 v5" fill="none" stroke="#444" stroke-width="0.7"/>
<path d="M8,396 l10,-4 M8,394 v4 M18,390 v4" fill="none" stroke="#f28a1e" stroke-width="1.2"/>
<circle cx="20.5" cy="402.5" r="4.2" fill="#fff" stroke="#333" stroke-width="1"/><path d="M17.5,405.5 l-4,4" stroke="#333" stroke-width="1.6"/>
<circle cx="12" cy="447" r="6" fill="url(#sg2)" stroke="#666" stroke-width="0.8"/><path d="M12,444.5 v6 M12,441.8 v1.3" stroke="#fff" stroke-width="1.7"/><path d="M16.5,438.5 a9,9 0 0 1 5.5,8 M17.5,436 a12,12 0 0 1 6,10" fill="none" stroke="#aaa" stroke-width="0.8"/>
<rect x="5" y="482" width="18" height="17" fill="#fff" stroke="#444" stroke-width="1"/><path d="M5,485.5 h18" stroke="#444" stroke-width="1"/><circle cx="14" cy="492" r="5" fill="#2a8cc0"/><path d="M11,490 q3,-2 5,1 q-2,3 1,4" fill="none" stroke="#9fd8f0" stroke-width="0.8"/>
<circle cx="13" cy="535" r="8" fill="none" stroke="#444" stroke-width="1.1"/><path d="M13,529.5 v5.5 h-3.5 M13,527 v1.5 M13,541.5 v1.5 M5,535 h1.5 M19.5,535 h1.5" fill="none" stroke="#444" stroke-width="1"/>
<rect x="6" y="562" width="6" height="17" fill="url(#rb)"/><path d="M14,565 l7,9" stroke="#111" stroke-width="2"/><circle cx="13" cy="564" r="1.5" fill="#fff"/>
<path d="M6.5,597 v16 M9.5,597 v16" stroke="#2a7fd0" stroke-width="2"/><path d="M5,613 h8" stroke="#e0c030" stroke-width="1.2"/><path d="M12,601 l9,8 M12,600 h10" stroke="#111" stroke-width="1.6"/><path d="M14,600 l9,-1" stroke="#2a7fd0" stroke-width="1"/>
<path d="M5,634 h5 l2,-2 h4 l2,2 h6 v17 h-19z" fill="#fff" stroke="#444" stroke-width="1"/><path d="M8,637 l13,11 M21,637 l-13,11" stroke="#222" stroke-width="1.9"/>
</svg>
<div id="nav" class="a"></div>
<div class="a" style="left:35px;top:144px;font-size:12.6px;color:#222;line-height:16px;white-space:nowrap">Part Navigator</div>
<div class="a" style="left:312px;top:146px;width:12px;height:11px;border:1px solid #333;border-top-width:2px"></div>
<div class="a" style="left:33px;top:164px;width:296px;height:22px;background:#f0f0f0;border-bottom:1px solid #dcdcdc;border-top:1px solid #e4e4e4"></div>
<div class="a" style="left:277px;top:165px;width:1px;height:20px;background:#d8d8d8"></div>
<div class="rt" style="left:38px;top:167px">Name</div>
<div class="a" style="left:86px;top:172px;width:0;height:0;border-left:5px solid transparent;border-right:5px solid transparent;border-bottom:6px solid #111"></div>
<div class="rt" style="left:283px;top:167px;font-size:12px;letter-spacing:-0.3px;z-index:2">Current .</div>
<div class="a" style="left:33px;top:186px;width:296px;height:20px;background:#fff;border-bottom:1px solid #efefef"></div>
<div class="a" style="left:33px;top:206px;width:296px;height:20px;background:#f8f8f8;border-bottom:1px solid #efefef"></div>
<div class="a" style="left:33px;top:226px;width:296px;height:20px;background:#fff;border-bottom:1px solid #efefef"></div>
<div class="a" style="left:33px;top:246px;width:296px;height:20px;background:#f8f8f8;border-bottom:1px solid #efefef"></div>
<div class="a" style="left:33px;top:266px;width:296px;height:20px;background:#fff;border-bottom:1px solid #efefef"></div>
<div class="a" style="left:33px;top:286px;width:296px;height:20px;background:#f8f8f8;border-bottom:1px solid #efefef"></div>
<div class="a" style="left:33px;top:306px;width:296px;height:20px;background:#fff;border-bottom:1px solid #efefef"></div>
<div class="a" style="left:33px;top:326px;width:296px;height:20px;background:#f8f8f8;border-bottom:1px solid #efefef"></div>
<div class="a" style="left:33px;top:346px;width:296px;height:20px;background:#fff;border-bottom:1px solid #efefef"></div>
<div class="a" style="left:33px;top:366px;width:296px;height:20px;background:#f8f8f8;border-bottom:1px solid #efefef"></div>
<div class="a" style="left:33px;top:386px;width:296px;height:20px;background:#fff;border-bottom:1px solid #efefef"></div>
<div class="a" style="left:33px;top:406px;width:296px;height:20px;background:#f8f8f8;border-bottom:1px solid #efefef"></div>
<div class="a" style="left:33px;top:426px;width:296px;height:20px;background:#fff;border-bottom:1px solid #efefef"></div>
<div class="a" style="left:33px;top:446px;width:296px;height:20px;background:#f8f8f8;border-bottom:1px solid #efefef"></div>
<div class="a" style="left:33px;top:466px;width:296px;height:20px;background:#fff;border-bottom:1px solid #efefef"></div>
<div class="a" style="left:33px;top:486px;width:296px;height:20px;background:#f8f8f8;border-bottom:1px solid #efefef"></div>
<div class="a" style="left:33px;top:506px;width:296px;height:20px;background:#fff;border-bottom:1px solid #efefef"></div>
<div class="a" style="left:33px;top:526px;width:296px;height:20px;background:#f8f8f8;border-bottom:1px solid #efefef"></div>
<div class="a" style="left:33px;top:546px;width:296px;height:20px;background:#fff;border-bottom:1px solid #efefef"></div>
<div class="a" style="left:33px;top:566px;width:296px;height:20px;background:#f8f8f8;border-bottom:1px solid #efefef"></div>
<div class="a" style="left:33px;top:586px;width:296px;height:20px;background:#fff;border-bottom:1px solid #efefef"></div>
<div class="a" style="left:33px;top:606px;width:296px;height:20px;background:#f8f8f8;border-bottom:1px solid #efefef"></div>
<div class="a" style="left:33px;top:626px;width:296px;height:20px;background:#fff;border-bottom:1px solid #efefef"></div>
<div class="a" style="left:33px;top:646px;width:296px;height:20px;background:#f8f8f8;border-bottom:1px solid #efefef"></div>
<div class="a" style="left:33px;top:666px;width:296px;height:20px;background:#fff;border-bottom:1px solid #efefef"></div>
<div class="a" style="left:33px;top:686px;width:296px;height:20px;background:#f8f8f8;border-bottom:1px solid #efefef"></div>
<div class="a" style="left:33px;top:706px;width:296px;height:20px;background:#fff;border-bottom:1px solid #efefef"></div>
<div class="a" style="left:33px;top:726px;width:296px;height:20px;background:#f8f8f8;border-bottom:1px solid #efefef"></div>
<div class="a" style="left:33px;top:746px;width:296px;height:20px;background:#fff;border-bottom:1px solid #efefef"></div>
<div class="a" style="left:33px;top:766px;width:296px;height:20px;background:#f8f8f8;border-bottom:1px solid #efefef"></div>
<div class="a" style="left:33px;top:786px;width:296px;height:20px;background:#fff;border-bottom:1px solid #efefef"></div>
<div class="a" style="left:33px;top:806px;width:296px;height:20px;background:#f8f8f8;border-bottom:1px solid #efefef"></div>
<div class="a" style="left:277px;top:186px;width:1px;height:625px;background:#ececec"></div>
<div class="a" style="left:329px;top:164px;width:1px;height:647px;background:#ececec"></div>
<div class="a" style="left:32px;top:164px;width:1px;height:647px;background:#f0f0f0"></div>
<svg class="a" style="left:0;top:0" width="340" height="460">
<path d="M41.5,196 v60 M41.5,196 h8 M56.5,264 v172 M56.5,276 h7 M56.5,296 h7 M56.5,316 h7 M56.5,336 h7 M56.5,356 h7 M56.5,376 h7 M56.5,396 h7 M56.5,416 h7 M56.5,436 h7" fill="none" stroke="#999" stroke-width="1" stroke-dasharray="1,1"/>
<path d="M37.5,216 h8 M41.5,212 v8" stroke="#444" stroke-width="1"/>
<path d="M37.5,236 h8 M41.5,232 v8" stroke="#444" stroke-width="1"/>
<path d="M37.5,256 h8" stroke="#444" stroke-width="1"/>
<path d="M65,276 q6,-7 12.4,0 q-6.4,7 -12.4,0z" fill="#fff" stroke="#555" stroke-width="1.1"/><circle cx="71.2" cy="276" r="2.7" fill="#474747"/>
<path d="M65,296 q6,-7 12.4,0 q-6.4,7 -12.4,0z" fill="#fff" stroke="#555" stroke-width="1.1"/><circle cx="71.2" cy="296" r="2.7" fill="#474747"/>
<path d="M65,316 q6,-7 12.4,0 q-6.4,7 -12.4,0z" fill="#fff" stroke="#555" stroke-width="1.1"/><circle cx="71.2" cy="316" r="2.7" fill="#474747"/>
<path d="M65,336 q6,-7 12.4,0 q-6.4,7 -12.4,0z" fill="#fff" stroke="#555" stroke-width="1.1"/><circle cx="71.2" cy="336" r="2.7" fill="#474747"/>
<path d="M65,356 q6,-7 12.4,0 q-6.4,7 -12.4,0z" fill="#fff" stroke="#555" stroke-width="1.1"/><circle cx="71.2" cy="356" r="2.7" fill="#474747"/>
<path d="M65,376 q6,-7 12.4,0 q-6.4,7 -12.4,0z" fill="#fff" stroke="#555" stroke-width="1.1"/><circle cx="71.2" cy="376" r="2.7" fill="#474747"/>
<path d="M65,396 q6,-7 12.4,0 q-6.4,7 -12.4,0z" fill="#fff" stroke="#555" stroke-width="1.1"/><circle cx="71.2" cy="396" r="2.7" fill="#474747"/>
<path d="M65,416 q6,-7 12.4,0 q-6.4,7 -12.4,0z" fill="#fff" stroke="#555" stroke-width="1.1"/><circle cx="71.2" cy="416" r="2.7" fill="#474747"/>
<path d="M65,436 q6,-7 12.4,0 q-6.4,7 -12.4,0z" fill="#fff" stroke="#555" stroke-width="1.1"/><circle cx="71.2" cy="436" r="2.7" fill="#474747"/>
<circle cx="56" cy="196" r="6" fill="#fff" stroke="#333" stroke-width="1.1"/><path d="M56,192 v4 h-3.5" fill="none" stroke="#333" stroke-width="1.1"/>
<rect x="50" y="209.5" width="13" height="13" fill="#fff" stroke="#555"/><path d="M50,212 h13" stroke="#555"/><path d="M53,220 q3,-5 7,0z" fill="#aaa" stroke="#777" stroke-width="0.6"/>
<path d="M50,237 l3.5,4 l7,-10" fill="none" stroke="#29b34a" stroke-width="2"/><path d="M65,242 l2,-11 h9 l-2,11z" fill="#fbd2a8" stroke="#f28a1e"/><path d="M68,238 l5,-4" stroke="#b05010" stroke-width="1.5"/>
<circle cx="55.5" cy="256" r="5.8" fill="#3cc03c" stroke="#2a8a2a"/><circle cx="53.5" cy="254" r="2" fill="#b8f0b0"/><rect x="64" y="250" width="12" height="12" fill="#fff" stroke="#555"/><rect x="67" y="254" width="7" height="7" fill="#f28a1e"/><rect x="66" y="252" width="5" height="5" fill="none" stroke="#888"/>
<path d="M86,269 v6 M86,277 l-5,4 M86,277 l5,4" fill="none" stroke="#e07090" stroke-width="1.2"/><circle cx="86" cy="277" r="3.2" fill="none" stroke="#e07090" stroke-width="1.1"/><circle cx="86" cy="269" r="1.2" fill="#e07090"/>
<path d="M81,302 v-11 M80,293 q4,-5 11,-5" fill="none" stroke="#29a0d8" stroke-width="1.1"/><path d="M81,302 h7" stroke="#29a0d8"/><circle cx="86" cy="296" r="3.3" fill="none" stroke="#29a0d8" stroke-width="1.1"/><path d="M85,302 l1,-3 7,-7 2,2 -7,7z" fill="#f5c842" stroke="#333" stroke-width="0.8"/>
<path d="M80,314 l3.5,2 v6 l-3.5,-2z" fill="#ddd" stroke="#555" stroke-width="0.7"/><path d="M83.5,316 l3.5,-2 v6 l-3.5,2z" fill="#aaa" stroke="#555" stroke-width="0.7"/><path d="M87,314 l3.5,2 v6 l-3.5,-2z" fill="#ddd" stroke="#555" stroke-width="0.7"/><path d="M90.5,316 l3.5,-2 v6 l-3.5,2z" fill="#aaa" stroke="#555" stroke-width="0.7"/><path d="M80,314 l7,-4 l7,4 l-3.5,2 l-3.5,-2 l-3.5,2z" fill="#eef6fb" stroke="#29a0d8" stroke-width="1.1"/>
<path d="M80,336 q0,-5 7,-5 q7,0 7,5 q0,4 -4,4 q-3,-3 -6,0 q-4,0 -4,-4z" fill="#bbb" stroke="#444" stroke-width="0.9"/><ellipse cx="83.5" cy="336" rx="1.8" ry="1.2" fill="#29a0d8"/><ellipse cx="90.5" cy="336" rx="1.8" ry="1.2" fill="#29a0d8"/>
<path d="M81,349 q3,2 6,0 q3,-2 6,1" fill="none" stroke="#29a0d8" stroke-width="1.1"/><path d="M80,354 l5,-4 l6,3 v6 l-6,4 l-5,-3z" fill="#ccc" stroke="#555" stroke-width="0.8"/><circle cx="86" cy="357" r="2.6" fill="#fff" stroke="#333" stroke-width="0.9"/><circle cx="91" cy="357" r="2.6" fill="#fff" stroke="#333" stroke-width="0.9"/><circle cx="86" cy="362" r="2.6" fill="#fff" stroke="#333" stroke-width="0.9"/><circle cx="91" cy="362" r="2.6" fill="#fff" stroke="#333" stroke-width="0.9"/>
<path d="M81,369 q3,2 6,0 q3,-2 6,1" fill="none" stroke="#29a0d8" stroke-width="1.1"/><path d="M80,374 l5,-4 l6,3 v6 l-6,4 l-5,-3z" fill="#ccc" stroke="#555" stroke-width="0.8"/><circle cx="86" cy="377" r="2.6" fill="#fff" stroke="#333" stroke-width="0.9"/><circle cx="91" cy="377" r="2.6" fill="#fff" stroke="#333" stroke-width="0.9"/><circle cx="86" cy="382" r="2.6" fill="#fff" stroke="#333" stroke-width="0.9"/><circle cx="91" cy="382" r="2.6" fill="#fff" stroke="#333" stroke-width="0.9"/>
<path d="M80,394 l6,-4 l7,3 v5 l-7,4 l-6,-3z" fill="#ddd" stroke="#555" stroke-width="0.8"/><path d="M80,394 l6,-4 l7,3 l-7,4z" fill="#f28a1e" stroke="#c06010" stroke-width="0.6"/><path d="M90,396 v9 M85.5,400.5 h9" stroke="#111" stroke-width="3"/><path d="M90,397 v7 M86.5,400.5 h7" stroke="#fff" stroke-width="1.1"/>
<path d="M80,413 l6,-4 l7,3 v6 l-7,4 l-6,-3z" fill="#ccc" stroke="#555" stroke-width="0.8"/><path d="M80,413 l6,-4 l7,3 l-7,4z" fill="#eee" stroke="#555" stroke-width="0.6"/><path d="M86,417 l7,7 M93,417 l-7,7" stroke="#333" stroke-width="2.2"/><path d="M86,417 l7,7 M93,417 l-7,7" stroke="#ddd" stroke-width="0.8"/>
<ellipse cx="85" cy="441" rx="5" ry="2.5" fill="#fff" stroke="#888" stroke-width="0.8"/><path d="M83,431 l5,-2 l5,2 v9 l-5,2 l-5,-2z" fill="#ddd" stroke="#555" stroke-width="0.8"/><path d="M84,433 q4,0 5,3 v5 l-5,-1z" fill="#f28a1e"/>
<rect x="283" y="430" width="7" height="12" fill="none" stroke="#999"/><rect x="285" y="433" width="3" height="3" fill="#f28a1e"/>
</svg>
<div class="rt" style="left:65px;top:187px;">History Modeling Mode</div>
<div class="rt" style="left:65px;top:207px;">Model Views</div>
<div class="rt" style="left:78px;top:227px;">Cameras</div>
<div class="rt" style="left:78px;top:247px;">Model History</div>
<div class="rt" style="left:94px;top:267px;">Datum Coordinate System (0)</div>
<div class="rt" style="left:94px;top:287px;">Sketch (1) &quot;SKETCH_000&quot;</div>
<div class="rt" style="left:94px;top:307px;">Extrude (2)</div>
<div class="rt" style="left:94px;top:327px;">Tube (3)</div>
<div class="rt" style="left:94px;top:347px;">Pattern Geometry [Circular] (12)</div>
<div class="rt" style="left:94px;top:367px;">Pattern Geometry [Linear] (13)</div>
<div class="rt" style="left:94px;top:387px;">Move Face (14)</div>
<div class="rt" style="left:94px;top:407px;">Delete Body (15)</div>
<div class="rt" style="left:94px;top:427px;font-weight:700;">Subtract (16)</div>
<div class="a" style="left:33px;top:812px;width:296px;height:16px;background:#f0f0f0"></div>
<div class="a" style="left:51px;top:812px;width:166px;height:16px;background:#cdcdcd"></div>
<svg class="a" style="left:33px;top:812px" width="296" height="16"><path d="M10.5,4 l-4,4 4,4 M285.5,4 l4,4 -4,4" fill="none" stroke="#333" stroke-width="1.3"/></svg>
<div class="a" style="left:32px;top:830px;width:298px;height:4px;background:#d6d6d6;border:1px solid #c8c8c8"></div>
<div id="vtabs" class="a"></div>
<div class="a" style="left:718px;top:139px;width:182px;height:24px;background:#0b5e98"></div>
<div class="a" style="left:339px;top:162px;width:1231px;height:2px;background:#0a2a66"></div>
<div class="a" style="left:360px;top:143px;font-size:12.3px;line-height:16px;color:#222;white-space:nowrap">Discovery Center</div>
<div class="a" style="left:492px;top:143px;font-size:12.3px;line-height:16px;color:#222;white-space:nowrap">cleanup_facet_body_wizard_demo.prt</div>
<div class="a" style="left:739px;top:143px;font-size:12.3px;line-height:16px;color:#fff;white-space:nowrap">pattern_body_demo.prt</div>
<svg class="a" style="left:0;top:0" width="1600" height="857">
<path d="M344.5,146 l3,-2 l3,1 l3,-1 l2.5,1.5 v11 l-2.5,-1 l-3,1 l-3,-1 l-3,1z M350.5,145 v11 M353.5,144 v11" fill="none" stroke="#444" stroke-width="1"/><circle cx="347.5" cy="153.5" r="3.2" fill="#fff" stroke="#444" stroke-width="1"/><path d="M346,155 l3,-3" stroke="#444" stroke-width="0.8"/>
<path d="M477,153 l3,-6 q2,-2 4,0 l4,4 l-3,4 l-5,1z" fill="#bbb" stroke="#555" stroke-width="0.9"/><ellipse cx="483" cy="152.5" rx="2.2" ry="1.2" fill="#eee" stroke="#555" stroke-width="0.6"/>
<path d="M724,153 l3,-6 q2,-2 4,0 l4,4 l-3,4 l-5,1z" fill="#c8c8c8" stroke="#e8e8e8" stroke-width="0.9"/><ellipse cx="730" cy="152.5" rx="2.2" ry="1.2" fill="#888" stroke="#eee" stroke-width="0.6"/>
<path d="M875,147 h6 v8 h-6z M878,152 l4,-4" fill="none" stroke="#fff" stroke-width="1.3"/><path d="M888,147 l6,6 M894,147 l-6,6" stroke="#fff" stroke-width="1.8"/>
<g stroke="#3550e8" stroke-width="1.3" fill="none">
<line x1="339" y1="385.1" x2="1570" y2="547.6"/>
<line x1="339" y1="396.8" x2="1570" y2="580.8"/>
<line x1="339" y1="407.8" x2="1570" y2="616.4"/>
<line x1="339" y1="418.8" x2="1570" y2="653.7"/>
<line x1="339" y1="431.4" x2="1570" y2="693.6"/>
<line x1="339" y1="445.6" x2="1570" y2="736.6"/>
<line x1="339" y1="459.7" x2="1570" y2="782.8"/>
<line x1="339" y1="475.5" x2="1570" y2="833.3"/>
<line x1="339" y1="492.2" x2="1415" y2="839"/>
<path d="M698.5,164.0 C703.4,167.2 719.1,176.3 727.7,183.0 C736.3,189.7 743.2,197.0 750.0,204.0 C756.8,211.0 762.9,217.6 768.5,225.0 C774.1,232.4 779.5,240.9 783.7,248.7 C788.0,256.5 791.5,263.8 794.0,272.0 C796.5,280.2 798.2,289.9 798.9,297.7 C799.6,305.5 799.4,310.9 798.4,318.7 C797.4,326.5 795.7,332.5 792.6,344.4 C789.5,356.3 782.1,382.4 780.0,390.0"/>
<path d="M339.0,610.0 C356.2,604.6 411.7,587.9 442.0,577.8 C472.3,567.7 503.3,555.8 520.6,549.5 C537.9,543.2 532.6,545.2 545.8,540.0 C559.0,534.8 591.0,521.7 600.0,518.0"/>
<path d="M1357.5,164.0 C1360.2,166.4 1366.7,171.6 1373.4,178.7 C1380.1,185.8 1390.3,197.4 1397.6,206.7 C1404.9,216.0 1411.3,225.0 1417.0,234.7 C1422.7,244.3 1427.8,254.6 1432.0,264.6 C1436.2,274.6 1439.9,284.4 1442.5,294.5 C1445.1,304.6 1446.8,313.2 1447.5,325.0 C1448.2,336.8 1448.8,351.7 1447.0,365.0 C1445.2,378.3 1441.3,390.9 1437.0,404.6 C1432.7,418.3 1427.5,433.9 1421.0,447.0 C1414.5,460.1 1407.0,470.7 1398.0,483.0 C1389.0,495.3 1377.9,509.8 1367.0,520.6 C1356.1,531.4 1343.9,538.5 1332.7,548.0 C1321.5,557.5 1313.8,565.4 1300.0,577.8 C1286.2,590.2 1273.9,606.3 1250.0,622.5 C1226.1,638.7 1188.6,657.9 1156.5,674.8 C1124.4,691.7 1096.9,707.0 1057.5,724.0 C1018.1,741.0 961.2,760.9 920.0,776.5 C878.8,792.1 840.2,807.2 810.0,817.8 C779.8,828.3 750.4,836.1 738.5,839.8"/>
</g>
<defs><linearGradient id="gstrip" gradientUnits="userSpaceOnUse" x1="800.0" y1="612.0" x2="796.0" y2="626.0"><stop offset="0" stop-color="#6a6e73"/><stop offset="0.5" stop-color="#7b7f84"/><stop offset="1" stop-color="#63676c"/></linearGradient><linearGradient id="gfront" gradientUnits="userSpaceOnUse" x1="700.0" y1="480.0" x2="690.0" y2="600.0"><stop offset="0" stop-color="#767c81"/><stop offset="1" stop-color="#70767b"/></linearGradient><linearGradient id="gf7" gradientUnits="userSpaceOnUse" x1="822.5" y1="520.6" x2="812.5" y2="552.9"><stop offset="0" stop-color="#9ea4a9"/><stop offset="0.3" stop-color="#a9aeb3"/><stop offset="0.7" stop-color="#bec3c7"/><stop offset="1" stop-color="#b6bbc0"/></linearGradient><linearGradient id="gg7" gradientUnits="userSpaceOnUse" x1="863.8" y1="501.8" x2="857.7" y2="523.5"><stop offset="0" stop-color="#979ea4"/><stop offset="0.25" stop-color="#a7aeb3"/><stop offset="0.55" stop-color="#c1c7cc"/><stop offset="0.8" stop-color="#c8ced2"/><stop offset="1" stop-color="#bcc2c7"/></linearGradient><linearGradient id="gg6" gradientUnits="userSpaceOnUse" x1="902.6" y1="483.0" x2="897.2" y2="504.3"><stop offset="0" stop-color="#979ea4"/><stop offset="0.25" stop-color="#a7aeb3"/><stop offset="0.55" stop-color="#c1c7cc"/><stop offset="0.8" stop-color="#c8ced2"/><stop offset="1" stop-color="#bcc2c7"/></linearGradient><linearGradient id="gg5" gradientUnits="userSpaceOnUse" x1="939.1" y1="463.2" x2="934.4" y2="483.9"><stop offset="0" stop-color="#979ea4"/><stop offset="0.25" stop-color="#a7aeb3"/><stop offset="0.55" stop-color="#c1c7cc"/><stop offset="0.8" stop-color="#c8ced2"/><stop offset="1" stop-color="#bcc2c7"/></linearGradient><linearGradient id="gg4" gradientUnits="userSpaceOnUse" x1="971.3" y1="442.9" x2="967.1" y2="463.4"><stop offset="0" stop-color="#979ea4"/><stop offset="0.25" stop-color="#a7aeb3"/><stop offset="0.55" stop-color="#c1c7cc"/><stop offset="0.8" stop-color="#c8ced2"/><stop offset="1" stop-color="#bcc2c7"/></linearGradient><linearGradient id="gg3" gradientUnits="userSpaceOnUse" x1="1000.8" y1="423.5" x2="997.2" y2="443.0"><stop offset="0" stop-color="#979ea4"/><stop offset="0.25" stop-color="#a7aeb3"/><stop offset="0.55" stop-color="#c1c7cc"/><stop offset="0.8" stop-color="#c8ced2"/><stop offset="1" stop-color="#bcc2c7"/></linearGradient><linearGradient id="gg2" gradientUnits="userSpaceOnUse" x1="1028.8" y1="403.0" x2="1025.4" y2="423.1"><stop offset="0" stop-color="#979ea4"/><stop offset="0.25" stop-color="#a7aeb3"/><stop offset="0.55" stop-color="#c1c7cc"/><stop offset="0.8" stop-color="#c8ced2"/><stop offset="1" stop-color="#bcc2c7"/></linearGradient><linearGradient id="gg1" gradientUnits="userSpaceOnUse" x1="1052.8" y1="382.0" x2="1049.9" y2="401.4"><stop offset="0" stop-color="#979ea4"/><stop offset="0.25" stop-color="#a7aeb3"/><stop offset="0.55" stop-color="#c1c7cc"/><stop offset="0.8" stop-color="#c8ced2"/><stop offset="1" stop-color="#bcc2c7"/></linearGradient><linearGradient id="gn0" gradientUnits="userSpaceOnUse" x1="1114.8" y1="674.2" x2="1114.8" y2="686.7"><stop offset="0" stop-color="#5a5f64"/><stop offset="0.6" stop-color="#7a7f84"/><stop offset="1" stop-color="#8c9196"/></linearGradient><linearGradient id="gn1" gradientUnits="userSpaceOnUse" x1="1161.7" y1="649.0" x2="1161.7" y2="663.0"><stop offset="0" stop-color="#5a5f64"/><stop offset="0.6" stop-color="#7a7f84"/><stop offset="1" stop-color="#8c9196"/></linearGradient><linearGradient id="gn2" gradientUnits="userSpaceOnUse" x1="1206.6" y1="624.5" x2="1206.6" y2="639.0"><stop offset="0" stop-color="#5a5f64"/><stop offset="0.6" stop-color="#7a7f84"/><stop offset="1" stop-color="#8c9196"/></linearGradient><linearGradient id="gn3" gradientUnits="userSpaceOnUse" x1="1247.0" y1="599.4" x2="1247.0" y2="614.5"><stop offset="0" stop-color="#5a5f64"/><stop offset="0.6" stop-color="#7a7f84"/><stop offset="1" stop-color="#8c9196"/></linearGradient><linearGradient id="gn4" gradientUnits="userSpaceOnUse" x1="1282.0" y1="574.2" x2="1282.0" y2="589.5"><stop offset="0" stop-color="#5a5f64"/><stop offset="0.6" stop-color="#7a7f84"/><stop offset="1" stop-color="#8c9196"/></linearGradient><linearGradient id="gn5" gradientUnits="userSpaceOnUse" x1="1315.0" y1="548.3" x2="1315.0" y2="564.3"><stop offset="0" stop-color="#5a5f64"/><stop offset="0.6" stop-color="#7a7f84"/><stop offset="1" stop-color="#8c9196"/></linearGradient><linearGradient id="gn6" gradientUnits="userSpaceOnUse" x1="1344.3" y1="522.4" x2="1344.3" y2="539.0"><stop offset="0" stop-color="#5a5f64"/><stop offset="0.6" stop-color="#7a7f84"/><stop offset="1" stop-color="#8c9196"/></linearGradient><linearGradient id="gh0" x1="0" y1="0" x2="0.25" y2="1"><stop offset="0" stop-color="#5d6267"/><stop offset="0.3" stop-color="#7c8186"/><stop offset="0.55" stop-color="#c5c9cc"/><stop offset="0.75" stop-color="#a9aeb2"/><stop offset="1" stop-color="#7f8489"/></linearGradient><linearGradient id="gh1" x1="0" y1="0" x2="0.25" y2="1"><stop offset="0" stop-color="#5d6267"/><stop offset="0.3" stop-color="#7c8186"/><stop offset="0.55" stop-color="#c5c9cc"/><stop offset="0.75" stop-color="#a9aeb2"/><stop offset="1" stop-color="#7f8489"/></linearGradient><linearGradient id="gh2" x1="0" y1="0" x2="0.25" y2="1"><stop offset="0" stop-color="#5d6267"/><stop offset="0.3" stop-color="#7c8186"/><stop offset="0.55" stop-color="#c5c9cc"/><stop offset="0.75" stop-color="#a9aeb2"/><stop offset="1" stop-color="#7f8489"/></linearGradient><linearGradient id="gh3" x1="0" y1="0" x2="0.25" y2="1"><stop offset="0" stop-color="#5d6267"/><stop offset="0.3" stop-color="#7c8186"/><stop offset="0.55" stop-color="#c5c9cc"/><stop offset="0.75" stop-color="#a9aeb2"/><stop offset="1" stop-color="#7f8489"/></linearGradient><linearGradient id="gh4" x1="0" y1="0" x2="0.25" y2="1"><stop offset="0" stop-color="#5d6267"/><stop offset="0.3" stop-color="#7c8186"/><stop offset="0.55" stop-color="#c5c9cc"/><stop offset="0.75" stop-color="#a9aeb2"/><stop offset="1" stop-color="#7f8489"/></linearGradient><linearGradient id="gh5" x1="0" y1="0" x2="0.25" y2="1"><stop offset="0" stop-color="#5d6267"/><stop offset="0.3" stop-color="#7c8186"/><stop offset="0.55" stop-color="#c5c9cc"/><stop offset="0.75" stop-color="#a9aeb2"/><stop offset="1" stop-color="#7f8489"/></linearGradient><linearGradient id="gh6" x1="0" y1="0" x2="0.25" y2="1"><stop offset="0" stop-color="#5d6267"/><stop offset="0.3" stop-color="#7c8186"/><stop offset="0.55" stop-color="#c5c9cc"/><stop offset="0.75" stop-color="#a9aeb2"/><stop offset="1" stop-color="#7f8489"/></linearGradient><linearGradient id="gh7" x1="0" y1="0" x2="0.25" y2="1"><stop offset="0" stop-color="#5d6267"/><stop offset="0.3" stop-color="#7c8186"/><stop offset="0.55" stop-color="#c5c9cc"/><stop offset="0.75" stop-color="#a9aeb2"/><stop offset="1" stop-color="#7f8489"/></linearGradient></defs><polygon points="522.4,527.8 537.6,533.0 539.0,537.2 571.7,553.5 576.0,555.6 1076.0,714.0 1072.0,712.4 1068.5,710.4 1065.7,708.0 1063.4,705.1 1061.8,701.7 1060.7,697.9 522.4,527.8" fill="url(#gstrip)" stroke="#3b3e42" stroke-width="0.8"/><polygon points="521.3,461.9 1060.5,630.4 1060.7,697.9 522.4,527.8 521.8,502.1 549.0,503.5 554.9,505.2 546.0,500.0 521.3,487.4" fill="url(#gfront)" stroke="#3b3e42" stroke-width="0.8"/><polygon points="521.3,461.9 524.8,458.3 527.9,454.9 530.5,451.8 532.6,448.8 534.3,446.1 535.5,443.6 536.4,441.3 536.7,439.2 548.6,442.2 560.5,442.7 562.3,440.0 563.9,437.4 565.2,435.0 566.3,432.8 567.2,430.7 567.9,428.8 568.4,427.1 568.6,425.5 580.0,428.4 591.3,428.7 592.7,426.1 593.9,423.6 595.0,421.3 595.9,419.1 596.6,417.1 597.1,415.2 597.5,413.5 597.7,412.0 608.6,414.6 619.5,414.6 620.6,412.1 621.5,409.7 622.4,407.4 623.1,405.3 623.6,403.4 624.1,401.6 624.4,400.0 624.6,398.5 634.9,400.4 645.2,399.8 646.4,397.4 647.5,395.1 648.4,392.9 649.2,390.9 649.9,389.1 650.4,387.4 650.7,385.8 650.9,384.4 660.2,386.3 669.5,385.7 670.4,383.3 671.3,381.0 672.0,378.8 672.6,376.8 673.1,375.0 673.5,373.3 673.8,371.7 674.0,370.3 683.0,371.9 692.0,370.9 692.6,368.5 693.1,366.3 693.6,364.3 694.0,362.3 694.3,360.5 694.6,358.9 694.8,357.4 695.0,356.0 703.0,357.3 711.0,356.0 711.8,353.6 712.6,351.4 713.2,349.3 713.8,347.4 714.2,345.6 714.6,343.9 714.8,342.4 715.0,341.0 735.5,341.8 756.0,340.0 1362.2,417.5 1362.2,417.5 1352.5,424.5 1351.9,430.1 1350.9,435.9 1349.5,441.5 1347.8,446.8 1346.0,451.4 1344.0,455.1 1342.0,457.8 1340.1,459.2 1338.4,459.4 1336.9,458.3 1335.8,455.9 1335.1,452.4 1334.8,448.0 1335.0,442.9 1324.5,450.8 1323.9,456.4 1322.7,462.1 1321.1,467.8 1319.2,473.0 1317.0,477.6 1314.7,481.4 1312.3,484.0 1310.0,485.4 1307.9,485.6 1306.1,484.5 1304.7,482.1 1303.8,478.6 1303.4,474.2 1303.5,469.1 1292.1,476.1 1291.6,481.8 1290.6,487.6 1289.1,493.3 1287.2,498.6 1284.9,503.2 1282.4,506.8 1279.9,509.4 1277.4,510.7 1275.1,510.8 1273.0,509.5 1271.3,507.0 1270.2,503.4 1269.5,498.8 1269.4,493.6 1256.3,500.6 1255.3,506.5 1253.8,512.5 1251.7,518.3 1249.2,523.7 1246.4,528.4 1243.5,532.0 1240.6,534.6 1237.8,535.9 1235.4,535.8 1233.3,534.4 1231.7,531.8 1230.8,528.0 1230.5,523.2 1230.8,517.8 1217.5,526.2 1216.7,532.1 1215.2,538.1 1213.1,543.9 1210.6,549.2 1207.7,553.8 1204.6,557.4 1201.4,559.8 1198.3,561.0 1195.5,560.8 1193.1,559.2 1191.2,556.5 1190.0,552.6 1189.4,547.8 1189.5,542.3 1174.1,551.4 1173.0,557.0 1171.2,562.8 1168.7,568.3 1165.7,573.4 1162.4,577.8 1158.8,581.3 1155.2,583.6 1151.8,584.7 1148.7,584.6 1146.0,583.1 1144.0,580.5 1142.7,576.8 1142.2,572.2 1142.5,567.0 1127.2,574.7 1125.9,580.6 1123.9,586.6 1121.2,592.4 1118.1,597.8 1114.6,602.3 1110.9,605.9 1107.2,608.3 1103.7,609.4 1100.6,609.2 1098.1,607.6 1096.1,604.8 1095.0,600.9 1094.6,596.0 1095.1,590.5 1076.8,598.9 1075.6,604.1 1073.8,609.3 1071.4,614.5 1068.4,619.8 1064.8,625.1 1060.5,630.4" fill="#b3b9bd"/><polygon points="521.3,461.9 524.8,458.3 527.9,454.9 530.5,451.8 532.6,448.8 534.3,446.1 535.5,443.6 536.4,441.3 536.7,439.2 560.5,442.7 568.3,442.3 1076.8,598.9 1076.8,598.9 1075.6,604.1 1073.8,609.3 1071.4,614.5 1068.4,619.8 1064.8,625.1 1060.5,630.4" fill="url(#gf7)"/><polygon points="753.0,339.5 756.0,340.0 1362.2,417.5 1352.5,424.5" fill="#b2b9be"/><polygon points="733.0,355.1 736.0,355.6 1335.0,442.9 1324.5,450.8" fill="#b2b9be"/><polygon points="709.6,370.8 712.6,371.3 1303.5,469.1 1292.1,476.1" fill="#b2b9be"/><polygon points="686.4,385.2 689.4,385.7 1269.4,493.6 1256.3,500.6" fill="#b2b9be"/><polygon points="660.8,400.3 663.8,400.8 1230.8,517.8 1217.5,526.2" fill="#b2b9be"/><polygon points="631.2,414.7 634.2,415.2 1189.5,542.3 1174.1,551.4" fill="#b2b9be"/><polygon points="600.4,428.8 603.4,429.3 1142.5,567.0 1127.2,574.7" fill="#b2b9be"/><polygon points="568.3,442.3 571.3,442.8 1095.1,590.5 1076.8,598.9" fill="#b2b9be"/><polygon points="571.3,442.8 560.5,442.7 562.3,440.0 563.9,437.4 565.2,435.0 566.3,432.8 567.2,430.7 567.9,428.8 568.4,427.1 568.6,425.5 600.4,428.8 1127.2,574.7 1127.2,574.7 1125.9,580.6 1123.9,586.6 1121.2,592.4 1118.1,597.8 1114.6,602.3 1110.9,605.9 1107.2,608.3 1103.7,609.4 1100.6,609.2 1098.1,607.6 1096.1,604.8 1095.0,600.9 1094.6,596.0 1095.1,590.5" fill="url(#gg7)"/><polygon points="603.4,429.3 591.3,428.7 592.7,426.1 593.9,423.6 595.0,421.3 595.9,419.1 596.6,417.1 597.1,415.2 597.5,413.5 597.7,412.0 631.2,414.7 1174.1,551.4 1174.1,551.4 1173.0,557.0 1171.2,562.8 1168.7,568.3 1165.7,573.4 1162.4,577.8 1158.8,581.3 1155.2,583.6 1151.8,584.7 1148.7,584.6 1146.0,583.1 1144.0,580.5 1142.7,576.8 1142.2,572.2 1142.5,567.0" fill="url(#gg6)"/><polygon points="634.2,415.2 619.5,414.6 620.6,412.1 621.5,409.7 622.4,407.4 623.1,405.3 623.6,403.4 624.1,401.6 624.4,400.0 624.6,398.5 660.8,400.3 1217.5,526.2 1217.5,526.2 1216.7,532.1 1215.2,538.1 1213.1,543.9 1210.6,549.2 1207.7,553.8 1204.6,557.4 1201.4,559.8 1198.3,561.0 1195.5,560.8 1193.1,559.2 1191.2,556.5 1190.0,552.6 1189.4,547.8 1189.5,542.3" fill="url(#gg5)"/><polygon points="663.8,400.8 645.2,399.8 646.4,397.4 647.5,395.1 648.4,392.9 649.2,390.9 649.9,389.1 650.4,387.4 650.7,385.8 650.9,384.4 686.4,385.2 1256.3,500.6 1256.3,500.6 1255.3,506.5 1253.8,512.5 1251.7,518.3 1249.2,523.7 1246.4,528.4 1243.5,532.0 1240.6,534.6 1237.8,535.9 1235.4,535.8 1233.3,534.4 1231.7,531.8 1230.8,528.0 1230.5,523.2 1230.8,517.8" fill="url(#gg4)"/><polygon points="689.4,385.7 669.5,385.7 670.4,383.3 671.3,381.0 672.0,378.8 672.6,376.8 673.1,375.0 673.5,373.3 673.8,371.7 674.0,370.3 709.6,370.8 1292.1,476.1 1292.1,476.1 1291.6,481.8 1290.6,487.6 1289.1,493.3 1287.2,498.6 1284.9,503.2 1282.4,506.8 1279.9,509.4 1277.4,510.7 1275.1,510.8 1273.0,509.5 1271.3,507.0 1270.2,503.4 1269.5,498.8 1269.4,493.6" fill="url(#gg3)"/><polygon points="712.6,371.3 692.0,370.9 692.6,368.5 693.1,366.3 693.6,364.3 694.0,362.3 694.3,360.5 694.6,358.9 694.8,357.4 695.0,356.0 733.0,355.1 1324.5,450.8 1324.5,450.8 1323.9,456.4 1322.7,462.1 1321.1,467.8 1319.2,473.0 1317.0,477.6 1314.7,481.4 1312.3,484.0 1310.0,485.4 1307.9,485.6 1306.1,484.5 1304.7,482.1 1303.8,478.6 1303.4,474.2 1303.5,469.1" fill="url(#gg2)"/><polygon points="736.0,355.6 711.0,356.0 711.8,353.6 712.6,351.4 713.2,349.3 713.8,347.4 714.2,345.6 714.6,343.9 714.8,342.4 715.0,341.0 753.0,339.5 1352.5,424.5 1352.5,424.5 1351.9,430.1 1350.9,435.9 1349.5,441.5 1347.8,446.8 1346.0,451.4 1344.0,455.1 1342.0,457.8 1340.1,459.2 1338.4,459.4 1336.9,458.3 1335.8,455.9 1335.1,452.4 1334.8,448.0 1335.0,442.9" fill="url(#gg1)"/><path d="M756.0,340.0 L1362.2,417.5 M824.9,349.7 L1352.5,424.5 M736.0,355.6 L1335.0,442.9 M804.0,366.6 L1324.5,450.8 M712.6,371.3 L1303.5,469.1 M779.5,383.4 L1292.1,476.1 M689.4,385.7 L1269.4,493.6 M754.8,399.0 L1256.3,500.6 M663.8,400.8 L1230.8,517.8 M727.6,415.4 L1217.5,526.2 M634.2,415.2 L1189.5,542.3 M696.3,431.1 L1174.1,551.4 M603.4,429.3 L1142.5,567.0 M663.6,446.3 L1127.2,574.7 M571.3,442.8 L1095.1,590.5 M629.3,461.1 L1076.8,598.9" stroke="#4b5055" stroke-width="0.85" fill="none"/><polyline points="521.3,461.9 524.8,458.3 527.9,454.9 530.5,451.8 532.6,448.8 534.3,446.1 535.5,443.6 536.4,441.3 536.7,439.2 548.6,442.2 560.5,442.7 571.3,442.0 571.3,442.8 560.5,442.7 560.5,442.7 562.3,440.0 563.9,437.4 565.2,435.0 566.3,432.8 567.2,430.7 567.9,428.8 568.4,427.1 568.6,425.5 580.0,428.4 591.3,428.7 603.4,428.5 603.4,429.3 591.3,428.7 591.3,428.7 592.7,426.1 593.9,423.6 595.0,421.3 595.9,419.1 596.6,417.1 597.1,415.2 597.5,413.5 597.7,412.0 608.6,414.6 619.5,414.6 634.2,414.4 634.2,415.2 619.5,414.6 619.5,414.6 620.6,412.1 621.5,409.7 622.4,407.4 623.1,405.3 623.6,403.4 624.1,401.6 624.4,400.0 624.6,398.5 634.9,400.4 645.2,399.8 663.8,400.0 663.8,400.8 645.2,399.8 645.2,399.8 646.4,397.4 647.5,395.1 648.4,392.9 649.2,390.9 649.9,389.1 650.4,387.4 650.7,385.8 650.9,384.4 660.2,386.3 669.5,385.7 689.4,384.9 689.4,385.7 669.5,385.7 669.5,385.7 670.4,383.3 671.3,381.0 672.0,378.8 672.6,376.8 673.1,375.0 673.5,373.3 673.8,371.7 674.0,370.3 683.0,371.9 692.0,370.9 712.6,370.5 712.6,371.3 692.0,370.9 692.0,370.9 692.6,368.5 693.1,366.3 693.6,364.3 694.0,362.3 694.3,360.5 694.6,358.9 694.8,357.4 695.0,356.0 703.0,357.3 711.0,356.0 736.0,354.8 736.0,355.6 711.0,356.0 711.0,356.0 711.8,353.6 712.6,351.4 713.2,349.3 713.8,347.4 714.2,345.6 714.6,343.9 714.8,342.4 715.0,341.0 735.5,341.8 756.0,340.0 1362.2,417.5" stroke="#3b3e42" stroke-width="0.8" fill="none"/><polygon points="1060.5,630.4 1064.8,625.1 1068.4,619.8 1071.4,614.5 1073.8,609.3 1075.6,604.1 1076.8,598.9 1095.1,590.5 1094.6,596.0 1095.0,600.9 1096.1,604.8 1098.1,607.6 1100.6,609.2 1103.7,609.4 1107.2,608.3 1110.9,605.9 1114.6,602.3 1118.1,597.8 1121.2,592.4 1123.9,586.6 1125.9,580.6 1127.2,574.7 1142.5,567.0 1142.2,572.2 1142.7,576.8 1144.0,580.5 1146.0,583.1 1148.7,584.6 1151.8,584.7 1155.2,583.6 1158.8,581.3 1162.4,577.8 1165.7,573.4 1168.7,568.3 1171.2,562.8 1173.0,557.0 1174.1,551.4 1189.5,542.3 1189.4,547.8 1190.0,552.6 1191.2,556.5 1193.1,559.2 1195.5,560.8 1198.3,561.0 1201.4,559.8 1204.6,557.4 1207.7,553.8 1210.6,549.2 1213.1,543.9 1215.2,538.1 1216.7,532.1 1217.5,526.2 1230.8,517.8 1230.5,523.2 1230.8,528.0 1231.7,531.8 1233.3,534.4 1235.4,535.8 1237.8,535.9 1240.6,534.6 1243.5,532.0 1246.4,528.4 1249.2,523.7 1251.7,518.3 1253.8,512.5 1255.3,506.5 1256.3,500.6 1269.4,493.6 1269.5,498.8 1270.2,503.4 1271.3,507.0 1273.0,509.5 1275.1,510.8 1277.4,510.7 1279.9,509.4 1282.4,506.8 1284.9,503.2 1287.2,498.6 1289.1,493.3 1290.6,487.6 1291.6,481.8 1292.1,476.1 1303.5,469.1 1303.4,474.2 1303.8,478.6 1304.7,482.1 1306.1,484.5 1307.9,485.6 1310.0,485.4 1312.3,484.0 1314.7,481.4 1317.0,477.6 1319.2,473.0 1321.1,467.8 1322.7,462.1 1323.9,456.4 1324.5,450.8 1335.0,442.9 1334.8,448.0 1335.1,452.4 1335.8,455.9 1336.9,458.3 1338.4,459.4 1340.1,459.2 1342.0,457.8 1344.0,455.1 1346.0,451.4 1347.8,446.8 1349.5,441.5 1350.9,435.9 1351.9,430.1 1352.5,424.5 1362.2,417.5 1363.0,430.6 1362.8,505.0 1361.3,520.8 1361.3,520.8 1350.6,537.1 1350.3,534.6 1349.9,532.3 1349.4,530.1 1348.8,528.2 1348.2,526.5 1347.5,525.0 1346.7,523.9 1345.9,523.1 1345.1,522.6 1344.3,522.4 1342.7,522.7 1341.1,523.5 1339.5,524.7 1338.1,526.5 1336.9,528.7 1335.8,531.3 1334.9,534.2 1334.3,537.3 1333.9,540.6 1333.8,544.0 1333.8,553.2 1322.6,563.7 1322.2,561.1 1321.8,558.7 1321.2,556.4 1320.5,554.3 1319.7,552.6 1318.9,551.1 1318.0,549.9 1317.0,549.0 1316.0,548.5 1315.0,548.3 1313.1,548.6 1311.3,549.4 1309.6,550.7 1307.9,552.5 1306.5,554.8 1305.3,557.4 1304.3,560.3 1303.6,563.5 1303.1,566.9 1303.0,570.3 1303.0,579.8 1290.4,589.6 1290.0,587.0 1289.5,584.6 1288.9,582.3 1288.2,580.3 1287.3,578.5 1286.4,577.0 1285.3,575.8 1284.3,574.9 1283.1,574.4 1282.0,574.2 1279.9,574.5 1277.9,575.2 1276.0,576.4 1274.2,578.1 1272.6,580.2 1271.2,582.7 1270.1,585.4 1269.4,588.4 1268.9,591.6 1268.7,594.8 1268.7,603.6 1255.2,614.5 1254.8,612.0 1254.3,609.6 1253.7,607.3 1253.0,605.3 1252.1,603.6 1251.2,602.1 1250.2,600.9 1249.2,600.1 1248.1,599.6 1247.0,599.4 1244.7,599.7 1242.4,600.4 1240.2,601.7 1238.2,603.4 1236.4,605.6 1234.9,608.1 1233.6,610.9 1232.7,614.0 1232.2,617.2 1232.0,620.5 1232.0,629.5 1216.4,640.0 1216.0,637.4 1215.3,634.9 1214.6,632.7 1213.7,630.6 1212.7,628.8 1211.6,627.3 1210.4,626.1 1209.2,625.2 1207.9,624.7 1206.6,624.5 1204.1,624.8 1201.6,625.6 1199.2,626.8 1197.1,628.6 1195.1,630.8 1193.5,633.4 1192.2,636.3 1191.2,639.4 1190.6,642.7 1190.4,646.1 1190.4,655.3 1173.0,665.8 1172.5,663.0 1171.8,660.3 1171.0,657.9 1170.0,655.6 1168.8,653.7 1167.6,652.0 1166.2,650.7 1164.7,649.8 1163.2,649.2 1161.7,649.0 1159.1,649.3 1156.5,650.1 1154.1,651.5 1151.9,653.3 1149.9,655.6 1148.2,658.3 1146.8,661.3 1145.8,664.6 1145.2,668.0 1145.0,671.5 1145.0,681.2 1126.7,690.3 1126.1,687.6 1125.4,685.0 1124.5,682.7 1123.4,680.5 1122.2,678.7 1120.9,677.1 1119.5,675.8 1117.9,674.9 1116.4,674.4 1114.8,674.2 1111.9,674.5 1109.0,675.3 1106.3,676.7 1103.7,678.5 1101.5,680.8 1099.6,683.5 1098.0,686.5 1096.9,689.8 1096.2,693.2 1096.0,696.7 1096.0,706.4 1076.0,714.0 1072.0,712.4 1068.5,710.4 1065.7,708.0 1063.4,705.1 1061.8,701.7 1060.7,697.9" fill="#8e959a" stroke="#3b3e42" stroke-width="0.8"/><polygon points="1362.2,417.5 1363,430.6 1369.2,432.4 1369.2,498 1363,505" fill="#7d8287" stroke="#3b3e42" stroke-width="0.6"/><polygon points="1096.0,684.7 1099.6,683.5 1101.5,680.8 1103.7,678.5 1106.3,676.7 1109.0,675.3 1111.9,674.5 1114.8,674.2 1116.4,674.4 1117.9,674.9 1119.5,675.8 1120.9,677.1 1122.2,678.7 1123.4,680.5 1124.5,682.7 1125.4,685.0 1126.1,687.6 1126.7,690.3 1126.7,690.3" fill="url(#gn0)" stroke="#3b3e42" stroke-width="0.6"/><polygon points="1145.0,661.0 1146.8,661.3 1148.2,658.3 1149.9,655.6 1151.9,653.3 1154.1,651.5 1156.5,650.1 1159.1,649.3 1161.7,649.0 1163.2,649.2 1164.7,649.8 1166.2,650.7 1167.6,652.0 1168.8,653.7 1170.0,655.6 1171.0,657.9 1171.8,660.3 1172.5,663.0 1173.0,665.8 1173.0,665.8" fill="url(#gn1)" stroke="#3b3e42" stroke-width="0.6"/><polygon points="1190.4,637.0 1192.2,636.3 1193.5,633.4 1195.1,630.8 1197.1,628.6 1199.2,626.8 1201.6,625.6 1204.1,624.8 1206.6,624.5 1207.9,624.7 1209.2,625.2 1210.4,626.1 1211.6,627.3 1212.7,628.8 1213.7,630.6 1214.6,632.7 1215.3,634.9 1216.0,637.4 1216.4,640.0 1216.4,640.0" fill="url(#gn2)" stroke="#3b3e42" stroke-width="0.6"/><polygon points="1232.0,612.5 1233.6,610.9 1234.9,608.1 1236.4,605.6 1238.2,603.4 1240.2,601.7 1242.4,600.4 1244.7,599.7 1247.0,599.4 1248.1,599.6 1249.2,600.1 1250.2,600.9 1251.2,602.1 1252.1,603.6 1253.0,605.3 1253.7,607.3 1254.3,609.6 1254.8,612.0 1255.2,614.5 1255.2,614.5" fill="url(#gn3)" stroke="#3b3e42" stroke-width="0.6"/><polygon points="1268.7,587.5 1270.1,585.4 1271.2,582.7 1272.6,580.2 1274.2,578.1 1276.0,576.4 1277.9,575.2 1279.9,574.5 1282.0,574.2 1283.1,574.4 1284.3,574.9 1285.3,575.8 1286.4,577.0 1287.3,578.5 1288.2,580.3 1288.9,582.3 1289.5,584.6 1290.0,587.0 1290.4,589.6 1290.4,589.6" fill="url(#gn4)" stroke="#3b3e42" stroke-width="0.6"/><polygon points="1303.0,562.3 1304.3,560.3 1305.3,557.4 1306.5,554.8 1307.9,552.5 1309.6,550.7 1311.3,549.4 1313.1,548.6 1315.0,548.3 1316.0,548.5 1317.0,549.0 1318.0,549.9 1318.9,551.1 1319.7,552.6 1320.5,554.3 1321.2,556.4 1321.8,558.7 1322.2,561.1 1322.6,563.7 1322.6,563.7" fill="url(#gn5)" stroke="#3b3e42" stroke-width="0.6"/><polygon points="1333.8,537.0 1334.9,534.2 1335.8,531.3 1336.9,528.7 1338.1,526.5 1339.5,524.7 1341.1,523.5 1342.7,522.7 1344.3,522.4 1345.1,522.6 1345.9,523.1 1346.7,523.9 1347.5,525.0 1348.2,526.5 1348.8,528.2 1349.4,530.1 1349.9,532.3 1350.3,534.6 1350.6,537.1 1350.6,537.1" fill="url(#gn6)" stroke="#3b3e42" stroke-width="0.6"/><ellipse cx="1086" cy="653.4" rx="16.8" ry="26" transform="rotate(12 1086 653.4)" fill="url(#gh0)" stroke="#3b3e42" stroke-width="0.8"/><ellipse cx="1135.6" cy="629" rx="15.9" ry="25.2" transform="rotate(12 1135.6 629)" fill="url(#gh1)" stroke="#3b3e42" stroke-width="0.8"/><ellipse cx="1181.4" cy="604.8" rx="14" ry="25.2" transform="rotate(12 1181.4 604.8)" fill="url(#gh2)" stroke="#3b3e42" stroke-width="0.8"/><ellipse cx="1224" cy="580" rx="13" ry="25" transform="rotate(12 1224 580)" fill="url(#gh3)" stroke="#3b3e42" stroke-width="0.8"/><ellipse cx="1262" cy="555" rx="12" ry="25" transform="rotate(12 1262 555)" fill="url(#gh4)" stroke="#3b3e42" stroke-width="0.8"/><ellipse cx="1297.4" cy="529.5" rx="10.8" ry="25" transform="rotate(12 1297.4 529.5)" fill="url(#gh5)" stroke="#3b3e42" stroke-width="0.8"/><ellipse cx="1329" cy="503.7" rx="9.6" ry="25" transform="rotate(12 1329 503.7)" fill="url(#gh6)" stroke="#3b3e42" stroke-width="0.8"/><ellipse cx="1356.2" cy="477.9" rx="8.6" ry="24.5" transform="rotate(12 1356.2 477.9)" fill="url(#gh7)" stroke="#3b3e42" stroke-width="0.8"/>
<g fill="none" stroke="#bdbdbd" stroke-width="1"><path d="M403.4,734.3 L421.7,722.9 L451.9,730.3 L433.6,740 Z M403.4,734.3 V767 L433.6,772.7 V740 M433.6,772.7 L451.9,762 V730.3"/></g>
<path d="M427.4,732 V707" stroke="#1038d8" stroke-width="3"/><path d="M423,708 L427.4,692 L432,708z" fill="#1038d8"/>
<path d="M442,751.5 L470,757" stroke="#d83a2a" stroke-width="3"/><path d="M465,752 L480,759 L465,762z" fill="#d83a2a"/>
<path d="M452,734 L458,730 L455,737z" fill="#2a8a3a"/>
<text x="424" y="689" font-size="9" fill="#3050e0" font-family="Liberation Sans">Z</text><text x="459" y="731" font-size="9" fill="#3a9a4a" font-family="Liberation Sans">Y</text><text x="483" y="765" font-size="10" fill="#d04040" font-family="Liberation Sans">X</text>
<circle cx="522" cy="330" r="8.5" fill="none" stroke="#555" stroke-width="1.2"/><path d="M522,318 v24 M510,330 h24" stroke="#555" stroke-width="1.5"/>
</svg>
<div class="a" style="left:1570px;top:164px;width:1px;height:675px;background:#dcdcdc"></div>
<svg class="a" style="left:1570px;top:140px" width="30" height="720">
<path d="M5,19.80000000000001 h7 M6,22.80000000000001 h6 M7,25.80000000000001 h6" stroke="#7ab8e8" stroke-width="1.5"/><polygon points="17,14.800000000000011 19.5,19.80000000000001 25,20.30000000000001 21,23.80000000000001 22.5,29.30000000000001 17,26.30000000000001 12,29.30000000000001 13.2,23.80000000000001 9,20.30000000000001 14.5,19.80000000000001" fill="#f8d840" stroke="#d8a020" stroke-width="0.7"/><path d="M12,14.800000000000011 q3,-4 8,-4 l3,-2 2,4 -4,2 q-3,3 -7,2z" fill="#f0c8a0" stroke="#888" stroke-width="0.6"/><path d="M20,9.800000000000011 l4,-2 2,4 -4,2z" fill="#2040b0"/>
<polygon points="5.0,46.5 13.0,50.0 13.0,54.0 5.0,50.5" fill="url(#il)" stroke="#444" stroke-width="0.9" stroke-linejoin="round" /><polygon points="13.0,50.0 21.0,46.5 21.0,50.5 13.0,54.0" fill="url(#ir)" stroke="#444" stroke-width="0.9" stroke-linejoin="round" /><polygon points="13.0,43.0 21.0,46.5 13.0,50.0 5.0,46.5" fill="url(#iw)" stroke="#444" stroke-width="0.9" stroke-linejoin="round" /><path d="M8.5,37 v7 a4.5,2.5 0 0 0 9.0,0 v-7z" fill="url(#ioh)" stroke="#c86000" stroke-width="0.7"/><ellipse cx="13" cy="37" rx="4.5" ry="2.5" fill="#ffb559" stroke="#c86000" stroke-width="0.7"/><path d="M14,54 l8,-7 a3,3 0 1 1 3,2" fill="none" stroke="#111" stroke-width="2.6"/><path d="M14,54 l8,-7 a3,3 0 1 1 3,2" fill="none" stroke="#fff" stroke-width="1"/>
<path d="M6,62.80000000000001 v10" stroke="#30a0e0" stroke-width="1"/><path d="M6,72.80000000000001 l10,-4" stroke="#30a040" stroke-width="1"/><path d="M6,72.80000000000001 l5,4" stroke="#d03030" stroke-width="1"/><path d="M13,76.80000000000001 q6,-6 12,0 q-6,6 -12,0z" fill="#fff" stroke="#222" stroke-width="1.1"/><circle cx="19" cy="76.80000000000001" r="2.2" fill="#222"/>
<polygon points="5.0,99.8 12.0,102.8 12.0,107.8 5.0,104.8" fill="url(#il)" stroke="#444" stroke-width="0.9" stroke-linejoin="round" /><polygon points="12.0,102.8 19.0,99.8 19.0,104.8 12.0,107.8" fill="url(#ir)" stroke="#444" stroke-width="0.9" stroke-linejoin="round" /><polygon points="12.0,96.8 19.0,99.8 12.0,102.8 5.0,99.8" fill="url(#iw)" stroke="#444" stroke-width="0.9" stroke-linejoin="round" /><polygon points="13.0,92.8 19.0,88.8 25.0,92.8 25.0,99.8 19.0,103.8 13.0,99.8" fill="url(#io)" stroke="#c86000" stroke-width="0.8" stroke-linejoin="round" /><path d="M16,94.80000000000001 l3,-2 3,2 v3 l-3,2 -3,-2z" fill="#fff" opacity="0.7"/>
<polygon points="5.0,121.8 10.5,124.8 10.5,133.8 5.0,130.8" fill="url(#il)" stroke="#444" stroke-width="0.9" stroke-linejoin="round" /><polygon points="10.5,124.8 15.0,121.8 15.0,130.8 10.5,133.8" fill="url(#ir)" stroke="#444" stroke-width="0.9" stroke-linejoin="round" /><polygon points="15.0,121.8 20.0,124.8 20.0,133.8 15.0,130.8" fill="url(#il)" stroke="#444" stroke-width="0.9" stroke-linejoin="round" /><polygon points="20.0,124.8 25.0,121.8 25.0,130.8 20.0,133.8" fill="url(#ir)" stroke="#444" stroke-width="0.9" stroke-linejoin="round" /><polygon points="5.0,121.8 15.0,115.8 25.0,121.8 20.0,124.8 15.0,121.8 10.5,124.8" fill="url(#iw)" stroke="#29a0d8" stroke-width="1.2" stroke-linejoin="round" />
<path d="M5,148.7 q9,-6 16,0 q4,4 4,11" fill="none" stroke="#29a0d8" stroke-width="1.4"/><circle cx="12" cy="144.7" r="2.2" fill="#fff" stroke="#444" stroke-width="0.9"/><circle cx="23" cy="147.7" r="2.2" fill="#fff" stroke="#444" stroke-width="0.9"/><path d="M24,151.7 v7" stroke="#999" stroke-dasharray="1,1"/>
<polygon points="5.0,174.7 14.0,168.7 24.0,173.7 25.0,183.7 16.0,188.7 5.0,183.7" fill="url(#ir)" stroke="#222" stroke-width="0.9" stroke-linejoin="round" /><path d="M15,172.7 q-3,-1 -4,3 l-2,10 q-1,2 -3,2 M9,176.7 h5" fill="none" stroke="#111" stroke-width="2.2"/><path d="M16,177.7 l6,7 M22,177.7 l-6,7" stroke="#111" stroke-width="2.2"/>
<path d="M5,204.7 l5,-8 l10,2 l4,6 v6 l-10,5z" fill="url(#ir)" stroke="#444" stroke-width="0.9"/><path d="M6,196.7 q6,3 10,-1 q5,-3 9,1" fill="none" stroke="#29a0d8" stroke-width="1.4"/><path d="M16,204.7 h6 l2,2 v8 h-8z" fill="#fff" stroke="#222" stroke-width="1"/>
<polygon points="4.0,233.2 12.0,236.7 12.0,240.7 4.0,237.2" fill="url(#il)" stroke="#444" stroke-width="0.9" stroke-linejoin="round" /><polygon points="12.0,236.7 20.0,233.2 20.0,237.2 12.0,240.7" fill="url(#ir)" stroke="#444" stroke-width="0.9" stroke-linejoin="round" /><polygon points="12.0,229.7 20.0,233.2 12.0,236.7 4.0,233.2" fill="url(#iw)" stroke="#444" stroke-width="0.9" stroke-linejoin="round" /><path d="M7.5,223.7 v7 a4.5,2.5 0 0 0 9.0,0 v-7z" fill="url(#ioh)" stroke="#c86000" stroke-width="0.7"/><ellipse cx="12" cy="223.7" rx="4.5" ry="2.5" fill="#ffb559" stroke="#c86000" stroke-width="0.7"/><rect x="15" y="230.7" width="10" height="10" fill="#fff" stroke="#222" stroke-width="1"/><path d="M18,233.7 h2 M18,237.7 h2 M19,233.7 v4 M20,235.7 h3" stroke="#222" stroke-width="0.8"/>
<path d="M5,257.6 l6,-9 l10,4 l1,8 l-11,6z" fill="url(#iw)" stroke="#444" stroke-width="0.9"/><path d="M5,257.6 l11,-3 l5,4 M11,248.60000000000002 l5,6 v6" fill="none" stroke="#666" stroke-width="0.6"/><path d="M11,262.6 h12 v4 h-12z" fill="#ddd" stroke="#222" stroke-width="0.9"/><path d="M13,262.6 v-3 h8 v3" fill="#fff" stroke="#222" stroke-width="0.9"/>
<path d="M4,277 h22" stroke="#e0e0e0"/>
<path d="M13,694 l-4,-3 4,-3z" fill="#222"/>
</svg>
<div id="status" class="a"></div>
<div class="a" style="left:3px;top:843px;font-size:12px;font-weight:700;color:#111;line-height:14px;white-space:nowrap;letter-spacing:-0.15px">Select objects and use MB3, or double-click an object</div>
<svg class="a" style="left:1466px;top:840px" width="18" height="17"><path d="M5,12 v-4 a4,4 0 0 1 8,0 v4 l1.5,1.5 h-11z M7.5,14.5 a1.5,1.5 0 0 0 3,0" fill="none" stroke="#333" stroke-width="1"/></svg>
<div class="a" style="left:1486px;top:842px;font-size:11.8px;color:#222;line-height:14px;white-space:nowrap">1 Notification</div>
</body></html>
